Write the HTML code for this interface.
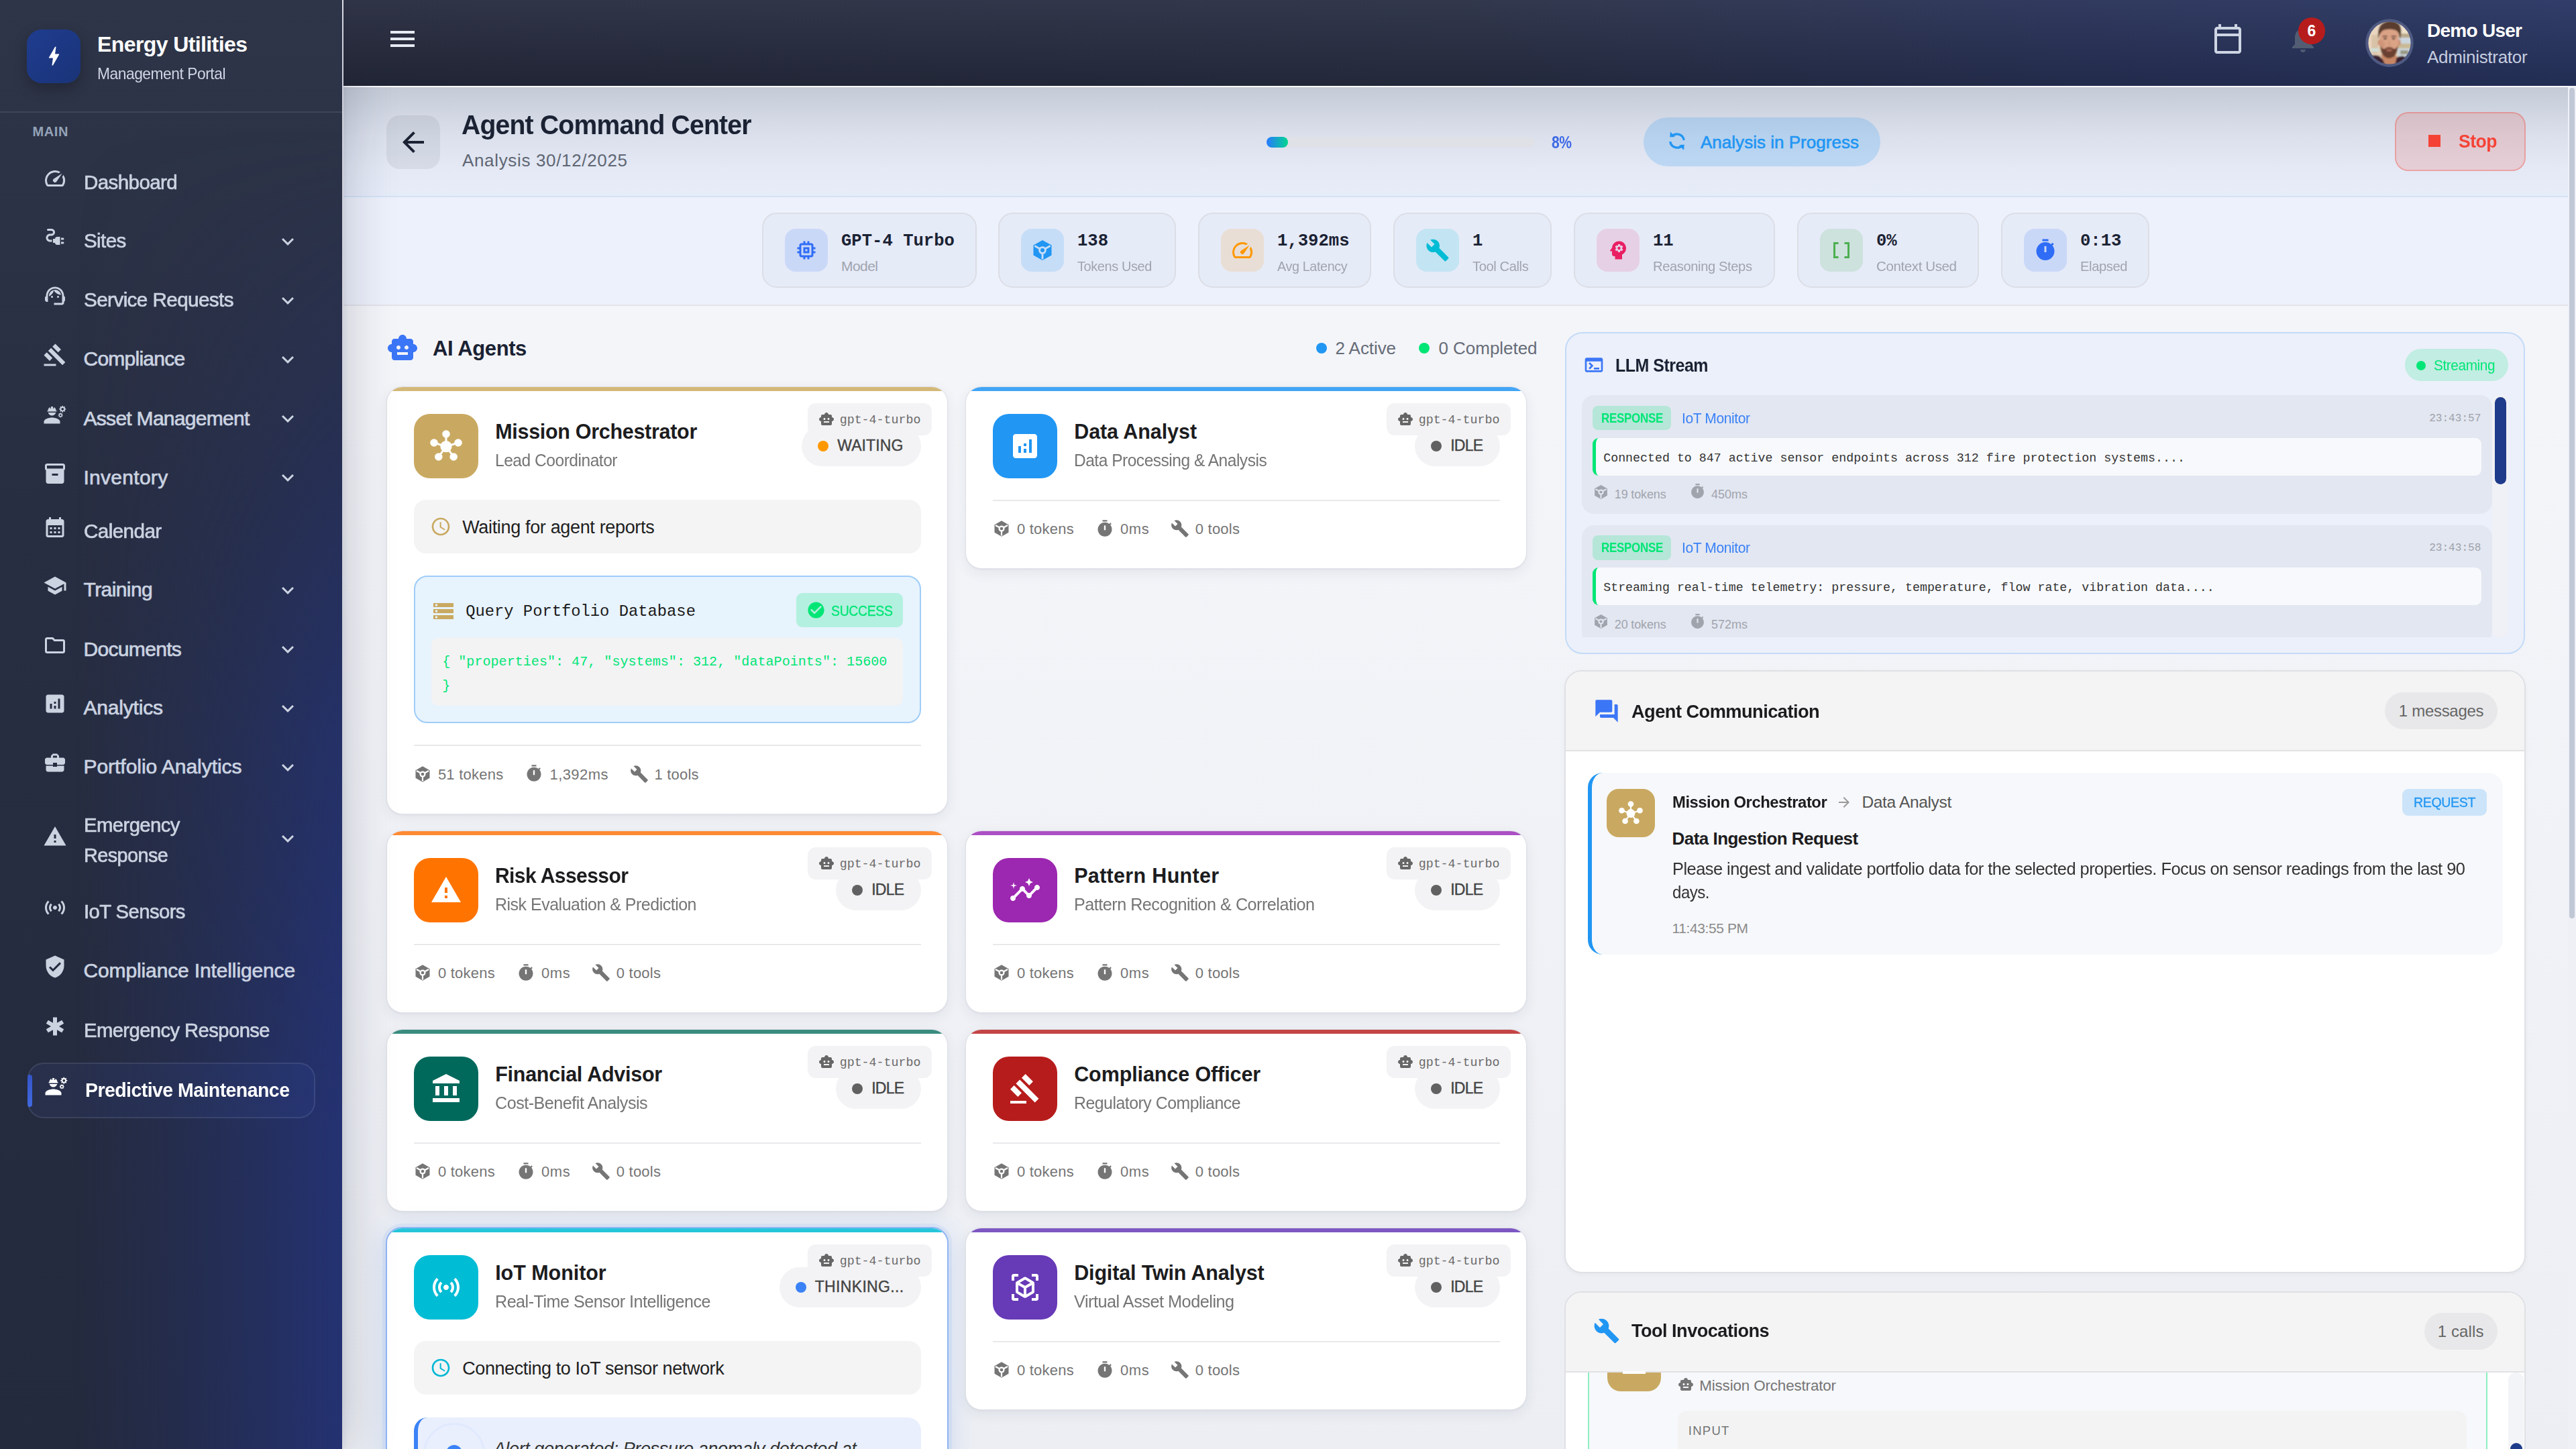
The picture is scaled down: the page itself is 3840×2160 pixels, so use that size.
<!DOCTYPE html><html lang="en"><head><meta charset="utf-8"><title>Agent Command Center</title><style>
*{box-sizing:border-box;margin:0;padding:0}
html,body{width:3840px;height:2160px;overflow:hidden}
body{position:relative;background:#f3f4f8;font-family:"Liberation Sans",sans-serif;font-kerning:none;-webkit-font-smoothing:antialiased}
div,span,svg{position:absolute}
#main{left:0;top:0;width:3840px;height:2160px;overflow:hidden;background:linear-gradient(180deg,#f4f5f9 0,#f4f5f9 600px,#eceef3 2160px)}
#sidebar{left:0;top:0;width:510px;height:2160px;background:linear-gradient(180deg,#2e3548 0%,#282e41 35%,#242a3d 100%);box-shadow:10px 0 70px rgba(20,30,60,.2),2px 0 10px rgba(20,30,60,.08)}
#sbblue{left:0;top:0;width:510px;height:2160px;background:linear-gradient(90deg,rgba(36,50,112,0) 22%,rgba(36,50,112,.28) 50%,rgba(36,50,112,.62) 75%,rgba(36,50,114,1) 100%);-webkit-mask-image:linear-gradient(180deg,transparent 9%,rgba(0,0,0,.3) 28%,rgba(0,0,0,.78) 50%,#000 78%);mask-image:linear-gradient(180deg,transparent 9%,rgba(0,0,0,.3) 28%,rgba(0,0,0,.78) 50%,#000 78%)}
#header{left:512px;top:0;width:3328px;height:128px;background:linear-gradient(180deg,rgba(255,255,255,.045) 0%,rgba(0,0,0,.15) 100%),linear-gradient(90deg,#262b3e 0%,#292f44 50%,#283258 78%,#283562 100%)}
.card{background:#fff;border:2px solid #e4e6ec;border-radius:24px;overflow:hidden;box-shadow:0 4px 16px rgba(30,40,70,.07)}
.strip{left:0;top:0;right:0;height:6px;width:100%}
</style></head><body>
<div id="main">
<div style="left:512px;top:128px;width:3316px;height:2px;background:#fbfcfe"></div>
<div style="left:512px;top:130px;width:3316px;height:162px;background:linear-gradient(180deg,#c4cad6 0%,#cdd3df 18%,#dbe0ec 45%,#e4e9f5 75%,#e7ecf9 100%)"></div>
<div style="left:512px;top:292px;width:3316px;height:2px;background:#d3e2f6"></div>
<div style="left:512px;top:294px;width:3316px;height:160px;background:#edf1fb"></div>
<div style="left:512px;top:454px;width:3316px;height:2px;background:#e3e4ea"></div>
<div style="position:absolute;left:576.0px;top:172.0px;width:80.0px;height:80.0px;background:rgba(30,40,60,.07);border-radius:20px"></div>
<svg style="position:absolute;left:592.0px;top:188.0px;" width="48" height="48" viewBox="0 0 24 24"><path fill="#1a2233" d="M20 11H7.83l5.59-5.59L12 4l-8 8 8 8 1.41-1.41L7.83 13H20v-2z"/></svg>
<span style="position:absolute;top:166.3px;font:700 40px/1 'Liberation Sans',sans-serif;color:#1a2233;letter-spacing:-0.80px;white-space:pre;left:688.0px;transform:scaleX(0.9772);transform-origin:left center;">Agent Command Center</span>
<span style="position:absolute;top:226.0px;font:400 26px/1 'Liberation Sans',sans-serif;color:#5f6673;letter-spacing:0.66px;white-space:pre;left:689.0px;">Analysis 30/12/2025</span>
<div style="position:absolute;left:1888.0px;top:204.0px;width:400.0px;height:16.0px;background:#dfe1e6;border-radius:8px"></div>
<div style="position:absolute;left:1888.0px;top:204.0px;width:32.0px;height:16.0px;background:linear-gradient(90deg,#2979ff,#00d68f);border-radius:8px"></div>
<span style="position:absolute;top:199.4px;font:700 26px/1 'Liberation Sans',sans-serif;color:#3f6ae6;letter-spacing:-0.52px;white-space:pre;left:2313.0px;transform:scaleX(0.8095);transform-origin:left center;">8%</span>
<div style="position:absolute;left:2450.0px;top:175.0px;width:353.0px;height:73.0px;background:rgba(33,150,243,.2);border-radius:37px"></div>
<svg style="left:2484.5px;top:194.8px" width="30" height="30" viewBox="0 0 24 24"><g fill="none" stroke="#2196f3" stroke-width="2.600"><path d="M20.200 11.200A8.300 8.300 0 0 0 5.600 6.900"/><path d="M3.800 12.800A8.300 8.300 0 0 0 18.400 17.100"/></g><path fill="#2196f3" d="M3.950 1.100 3.400 7.600 9.800 6.700zM20.050 22.900 20.600 16.400 14.200 17.300z"/></svg>
<span style="position:absolute;top:199.4px;font:400 26px/1 'Liberation Sans',sans-serif;color:#2196f3;letter-spacing:0.02px;white-space:pre;left:2535.0px;-webkit-text-stroke:0.6px #2196f3;">Analysis in Progress</span>
<div style="position:absolute;left:3570.0px;top:167.0px;width:195.0px;height:88.0px;background:rgba(244,67,54,.16);border:2px solid rgba(244,67,54,.32);border-radius:20px"></div>
<div style="position:absolute;left:3620.0px;top:201.0px;width:18.0px;height:18.0px;background:#f44336"></div>
<span style="position:absolute;top:196.9px;font:700 28px/1 'Liberation Sans',sans-serif;color:#f44336;letter-spacing:-0.56px;white-space:pre;left:3664.5px;transform:scaleX(0.9500);transform-origin:left center;">Stop</span>
<div style="position:absolute;left:1136.0px;top:317.0px;width:320.0px;height:112.0px;background:#e6ebf8;border:2px solid #dcdee5;border-radius:22px"></div>
<div style="position:absolute;left:1170.0px;top:341.0px;width:64.0px;height:64.0px;background:rgba(47,109,246,.15);border-radius:16px"></div>
<svg style="position:absolute;left:1184.0px;top:355.0px;" width="36" height="36" viewBox="0 0 24 24"><path fill="#2f6df6" d="M15 9H9v6h6V9zm-2 4h-2v-2h2v2zm8-2V9h-2V7c0-1.1-.9-2-2-2h-2V3h-2v2h-2V3H9v2H7c-1.1 0-2 .9-2 2v2H3v2h2v2H3v2h2v2c0 1.1.9 2 2 2h2v2h2v-2h2v2h2v-2h2c1.1 0 2-.9 2-2v-2h2v-2h-2v-2h2zm-4 6H7V7h10v10z"/></svg>
<span style="position:absolute;top:347.3px;font:700 25.6px/1 'Liberation Mono',monospace;color:#1a2233;letter-spacing:0.00px;white-space:pre;left:1254.0px;">GPT-4 Turbo</span>
<span style="position:absolute;top:386.2px;font:400 21px/1 'Liberation Sans',sans-serif;color:#9fa4ae;letter-spacing:-0.55px;white-space:pre;left:1254.0px;">Model</span>
<div style="position:absolute;left:1488.0px;top:317.0px;width:265.0px;height:112.0px;background:#e6ebf8;border:2px solid #dcdee5;border-radius:22px"></div>
<div style="position:absolute;left:1522.0px;top:341.0px;width:64.0px;height:64.0px;background:rgba(33,150,243,.16);border-radius:16px"></div>
<svg style="left:1536px;top:355px" width="36" height="36" viewBox="0 0 24 24"><use href="#tok" fill="#2196f3"/></svg>
<span style="position:absolute;top:347.3px;font:700 25.6px/1 'Liberation Mono',monospace;color:#1a2233;letter-spacing:0.00px;white-space:pre;left:1606.0px;">138</span>
<span style="position:absolute;top:386.2px;font:400 21px/1 'Liberation Sans',sans-serif;color:#9fa4ae;letter-spacing:-0.42px;white-space:pre;left:1606.0px;transform:scaleX(0.9496);transform-origin:left center;">Tokens Used</span>
<div style="position:absolute;left:1786.0px;top:317.0px;width:258.0px;height:112.0px;background:#e6ebf8;border:2px solid #dcdee5;border-radius:22px"></div>
<div style="position:absolute;left:1820.0px;top:341.0px;width:64.0px;height:64.0px;background:rgba(255,152,0,.14);border-radius:16px"></div>
<svg style="position:absolute;left:1834.0px;top:355.0px;" width="36" height="36" viewBox="0 0 24 24"><path fill="#ff9800" d="M20.38 8.57l-1.23 1.85a8 8 0 0 1-.22 7.58H5.07A8 8 0 0 1 15.58 6.85l1.85-1.23A10 10 0 0 0 3.35 19a2 2 0 0 0 1.72 1h13.85a2 2 0 0 0 1.74-1 10 10 0 0 0-.27-10.44zm-9.79 6.84a2 2 0 0 0 2.83 0l5.66-8.49-8.49 5.66a2 2 0 0 0 0 2.83z"/></svg>
<span style="position:absolute;top:347.3px;font:700 25.6px/1 'Liberation Mono',monospace;color:#1a2233;letter-spacing:0.00px;white-space:pre;left:1904.0px;">1,392ms</span>
<span style="position:absolute;top:386.2px;font:400 21px/1 'Liberation Sans',sans-serif;color:#9fa4ae;letter-spacing:-0.42px;white-space:pre;left:1904.0px;transform:scaleX(0.9428);transform-origin:left center;">Avg Latency</span>
<div style="position:absolute;left:2077.0px;top:317.0px;width:236.0px;height:112.0px;background:#e6ebf8;border:2px solid #dcdee5;border-radius:22px"></div>
<div style="position:absolute;left:2111.0px;top:341.0px;width:64.0px;height:64.0px;background:rgba(0,188,212,.15);border-radius:16px"></div>
<svg style="position:absolute;left:2125.0px;top:355.0px;" width="36" height="36" viewBox="0 0 24 24"><path fill="#00bcd4" d="M22.7 19l-9.1-9.1c.9-2.3.4-5-1.5-6.9-2-2-5-2.4-7.4-1.3L9 6 6 9 1.6 4.7C.4 7.1.9 10.1 2.9 12.1c1.9 1.9 4.6 2.4 6.9 1.5l9.1 9.1c.4.4 1 .4 1.4 0l2.3-2.3c.5-.4.5-1.1.1-1.4z"/></svg>
<span style="position:absolute;top:347.3px;font:700 25.6px/1 'Liberation Mono',monospace;color:#1a2233;letter-spacing:0.00px;white-space:pre;left:2195.0px;">1</span>
<span style="position:absolute;top:386.2px;font:400 21px/1 'Liberation Sans',sans-serif;color:#9fa4ae;letter-spacing:-0.42px;white-space:pre;left:2195.0px;transform:scaleX(0.9600);transform-origin:left center;">Tool Calls</span>
<div style="position:absolute;left:2346.0px;top:317.0px;width:300.0px;height:112.0px;background:#e6ebf8;border:2px solid #dcdee5;border-radius:22px"></div>
<div style="position:absolute;left:2380.0px;top:341.0px;width:64.0px;height:64.0px;background:rgba(233,30,99,.13);border-radius:16px"></div>
<svg style="position:absolute;left:2394.0px;top:355.0px;" width="36" height="36" viewBox="0 0 24 24"><path fill="#e91e63" d="M13 3C9.25 3 6.2 5.94 6.02 9.64L4.1 12.2c-.25.33-.01.8.4.8H6v3c0 1.1.9 2 2 2h1v3h7v-4.68c2.36-1.12 4-3.53 4-6.32 0-3.87-3.13-7-7-7zm3 7c0 .13-.01.26-.02.39l.83.66c.08.06.1.16.05.25l-.8 1.39c-.05.09-.16.12-.24.09l-.99-.4c-.21.16-.43.29-.67.39L14 13.83c-.01.1-.1.17-.2.17h-1.6c-.1 0-.18-.07-.2-.17l-.15-1.06c-.25-.1-.47-.23-.68-.39l-.99.4c-.09.03-.2 0-.25-.09l-.8-1.39c-.05-.08-.03-.19.05-.25l.84-.66c-.01-.13-.02-.26-.02-.39s.02-.27.04-.39l-.85-.66c-.08-.06-.1-.16-.05-.26l.8-1.38c.05-.09.15-.12.24-.09l1 .4c.2-.15.43-.29.67-.39L12 6.17c.02-.1.1-.17.2-.17h1.6c.1 0 .18.07.2.17l.15 1.06c.24.1.46.23.67.39l1-.4c.09-.03.2 0 .24.09l.8 1.38c.05.09.03.2-.05.26l-.85.66c.03.12.04.25.04.39zM13 8.57c-.79 0-1.43.64-1.43 1.43s.64 1.43 1.43 1.43 1.43-.64 1.43-1.43-.64-1.43-1.43-1.43z"/></svg>
<span style="position:absolute;top:347.3px;font:700 25.6px/1 'Liberation Mono',monospace;color:#1a2233;letter-spacing:0.00px;white-space:pre;left:2464.0px;">11</span>
<span style="position:absolute;top:386.2px;font:400 21px/1 'Liberation Sans',sans-serif;color:#9fa4ae;letter-spacing:-0.42px;white-space:pre;left:2464.0px;transform:scaleX(0.9607);transform-origin:left center;">Reasoning Steps</span>
<div style="position:absolute;left:2679.0px;top:317.0px;width:271.0px;height:112.0px;background:#e6ebf8;border:2px solid #dcdee5;border-radius:22px"></div>
<div style="position:absolute;left:2713.0px;top:341.0px;width:64.0px;height:64.0px;background:rgba(76,175,80,.16);border-radius:16px"></div>
<svg style="position:absolute;left:2727.0px;top:355.0px;" width="36" height="36" viewBox="0 0 24 24"><path fill="#4caf50" d="M15 4v2h3v12h-3v2h5V4zM4 20h5v-2H6V6h3V4H4z"/></svg>
<span style="position:absolute;top:347.3px;font:700 25.6px/1 'Liberation Mono',monospace;color:#1a2233;letter-spacing:0.00px;white-space:pre;left:2797.0px;">0%</span>
<span style="position:absolute;top:386.2px;font:400 21px/1 'Liberation Sans',sans-serif;color:#9fa4ae;letter-spacing:-0.42px;white-space:pre;left:2797.0px;transform:scaleX(0.9787);transform-origin:left center;">Context Used</span>
<div style="position:absolute;left:2983.0px;top:317.0px;width:221.0px;height:112.0px;background:#e6ebf8;border:2px solid #dcdee5;border-radius:22px"></div>
<div style="position:absolute;left:3017.0px;top:341.0px;width:64.0px;height:64.0px;background:rgba(47,109,246,.15);border-radius:16px"></div>
<svg style="position:absolute;left:3031.0px;top:355.0px;" width="36" height="36" viewBox="0 0 24 24"><path fill="#2f6df6" d="M9 1h6v2H9zm10.03 6.39l1.42-1.42c-.43-.51-.9-.99-1.41-1.41l-1.42 1.42C16.07 4.74 14.12 4 12 4c-4.97 0-9 4.03-9 9s4.02 9 9 9 9-4.03 9-9c0-2.12-.74-4.07-1.97-5.61zM13 14h-2V8h2v6z"/></svg>
<span style="position:absolute;top:347.3px;font:700 25.6px/1 'Liberation Mono',monospace;color:#1a2233;letter-spacing:0.00px;white-space:pre;left:3101.0px;">0:13</span>
<span style="position:absolute;top:386.2px;font:400 21px/1 'Liberation Sans',sans-serif;color:#9fa4ae;letter-spacing:-0.42px;white-space:pre;left:3101.0px;transform:scaleX(0.9609);transform-origin:left center;">Elapsed</span>
<svg style="position:absolute;left:576.0px;top:495.0px;" width="48" height="48" viewBox="0 0 24 24"><path fill="#3b76f6" d="M20 9V7c0-1.1-.9-2-2-2h-3c0-1.66-1.34-3-3-3S9 3.34 9 5H6c-1.1 0-2 .9-2 2v2c-1.66 0-3 1.34-3 3s1.34 3 3 3v4c0 1.1.9 2 2 2h12c1.1 0 2-.9 2-2v-4c1.66 0 3-1.34 3-3s-1.34-3-3-3zM7.5 11.5c0-.83.67-1.5 1.5-1.5s1.5.67 1.5 1.5S9.83 13 9 13s-1.5-.67-1.5-1.5zM16 17H8v-2h8v2zm-1-4c-.83 0-1.5-.67-1.5-1.5S14.17 10 15 10s1.5.67 1.5 1.5S15.83 13 15 13z"/></svg>
<span style="position:absolute;top:503.5px;font:700 31px/1 'Liberation Sans',sans-serif;color:#1a2233;letter-spacing:-0.40px;white-space:pre;left:645.0px;">AI Agents</span>
<div style="position:absolute;left:1961.7px;top:511.0px;width:16.0px;height:16.0px;background:#2196f3;border-radius:50%"></div>
<span style="position:absolute;top:506.2px;font:400 26px/1 'Liberation Sans',sans-serif;color:#666c78;letter-spacing:-0.07px;white-space:pre;left:1990.5px;">2 Active</span>
<div style="position:absolute;left:2115.3px;top:511.0px;width:16.0px;height:16.0px;background:#00e676;border-radius:50%"></div>
<span style="position:absolute;top:506.2px;font:400 26px/1 'Liberation Sans',sans-serif;color:#666c78;letter-spacing:-0.04px;white-space:pre;left:2144.5px;">0 Completed</span>
<svg width="0" height="0" style="left:0;top:0"><defs>
<mask id="tokm"><rect width="24" height="24" fill="#000"/><path d="M12 2 21 7v10l-9 5-9-5V7z" fill="#fff"/>
<path d="M12 12 4.200 7.700M12 12l7.800-4.300M12 12v9" stroke="#000" stroke-width="1.900" fill="none"/>
<circle cx="12" cy="12" r="3.900" fill="#000"/><circle cx="12" cy="12" r="2" fill="#fff"/></mask>
<g id="tok"><rect width="24" height="24" mask="url(#tokm)"/></g>
<g id="hub"><g stroke="#fff" stroke-width="1.500"><path d="M12 12.300V3M12 12.300l9-2.800M12 12.300l5.600 7.600M12 12.300l-5.600 7.600M12 12.300 3 9.500"/></g>
<circle cx="12" cy="12.300" r="4.300"/><circle cx="12" cy="3" r="2.900"/><circle cx="21" cy="9.500" r="2.900"/><circle cx="17.600" cy="20" r="2.900"/><circle cx="6.400" cy="20" r="2.900"/><circle cx="3" cy="9.500" r="2.900"/></g>
</defs></svg>
<div class="card" style="left:576.2px;top:576px;width:837px;height:637.5px;border:1px solid #dfe1e7;box-shadow:0 6px 20px rgba(30,40,70,.07),0 1px 3px rgba(30,40,70,.05)"><div style="left:0;top:0;width:100%;height:6px;background:#d4b878"></div><div style="position:absolute;left:40.0px;top:39.5px;width:96.0px;height:96.0px;background:#c9a961;border-radius:24px"></div><svg style="left:64.0px;top:63.5px" width="48" height="48" viewBox="0 0 24 24"><use href="#hub" fill="#fff"/></svg><span style="position:absolute;top:50.7px;font:700 30.5px/1 'Liberation Sans',sans-serif;color:#1c1c1e;letter-spacing:-0.30px;white-space:pre;left:161.0px;">Mission Orchestrator</span><span style="position:absolute;top:95.5px;font:400 26px/1 'Liberation Sans',sans-serif;color:#757575;letter-spacing:-0.52px;white-space:pre;left:161.0px;transform:scaleX(0.9450);transform-origin:left center;">Lead Coordinator</span><div style="position:absolute;left:627.0px;top:24.0px;width:184.5px;height:47.5px;background:#f3f3f5;border-radius:12px"></div><svg style="position:absolute;left:643.0px;top:35.5px;" width="24" height="24" viewBox="0 0 24 24"><path fill="#666" d="M20 9V7c0-1.1-.9-2-2-2h-3c0-1.66-1.34-3-3-3S9 3.34 9 5H6c-1.1 0-2 .9-2 2v2c-1.66 0-3 1.34-3 3s1.34 3 3 3v4c0 1.1.9 2 2 2h12c1.1 0 2-.9 2-2v-4c1.66 0 3-1.34 3-3s-1.34-3-3-3zM7.5 11.5c0-.83.67-1.5 1.5-1.5s1.5.67 1.5 1.5S9.83 13 9 13s-1.5-.67-1.5-1.5zM16 17H8v-2h8v2zm-1-4c-.83 0-1.5-.67-1.5-1.5S14.17 10 15 10s1.5.67 1.5 1.5S15.83 13 15 13z"/></svg><span style="position:absolute;top:40.3px;font:400 18.3px/1 'Liberation Mono',monospace;color:#6a6a6a;letter-spacing:0.00px;white-space:pre;left:674.5px;">gpt-4-turbo</span><div style="position:absolute;left:618.0px;top:58.0px;width:177.5px;height:60.0px;background:#f3f3f5;border-radius:30px"></div><div style="position:absolute;left:642.0px;top:80.0px;width:16.0px;height:16.0px;background:#ff9800;border-radius:50%"></div><span style="position:absolute;top:76.0px;font:400 23px/1 'Liberation Sans',sans-serif;color:#444;letter-spacing:0.10px;white-space:pre;left:671.0px;-webkit-text-stroke:0.4px #444;">WAITING</span><div style="position:absolute;left:40.0px;top:168.0px;width:755.5px;height:80.0px;background:#f4f4f5;border-radius:18px"></div><svg style="position:absolute;left:64.0px;top:192.0px;" width="32" height="32" viewBox="0 0 24 24"><path fill="#c9a961" d="M11.99 2C6.47 2 2 6.48 2 12s4.47 10 9.99 10C17.52 22 22 17.52 22 12S17.52 2 11.99 2zM12 20c-4.42 0-8-3.58-8-8s3.58-8 8-8 8 3.58 8 8-3.58 8-8 8zm.5-13H11v6l5.25 3.15.75-1.23-4.5-2.67z"/></svg><span style="position:absolute;top:196.3px;font:400 27px/1 'Liberation Sans',sans-serif;color:#1f1f1f;letter-spacing:-0.34px;white-space:pre;left:112.0px;">Waiting for agent reports</span><div style="left:40px;top:281px;width:755.5px;height:220px;background:#e7f3fd;border:2px solid #9fcdf9;border-radius:20px"><svg style="position:absolute;left:24.0px;top:33.0px;" width="36" height="36" viewBox="0 0 24 24"><path fill="#c9a961" d="M2 20h20v-4H2v4zm2-3h2v2H4v-2zM2 4v4h20V4H2zm4 3H4V5h2v2zm-4 7h20v-4H2v4zm2-3h2v2H4v-2z"/></svg><span style="position:absolute;top:39.5px;font:400 23.8px/1 'Liberation Mono',monospace;color:#1a1a1a;letter-spacing:0.00px;white-space:pre;left:75.0px;">Query Portfolio Database</span><div style="position:absolute;left:567.5px;top:24.0px;width:159.0px;height:50.5px;background:rgba(0,230,118,.22);border-radius:9px"></div><svg style="position:absolute;left:582.5px;top:35.0px;" width="29" height="29" viewBox="0 0 24 24"><path fill="#00e676" d="M12 2C6.48 2 2 6.48 2 12s4.48 10 10 10 10-4.48 10-10S17.52 2 12 2zm-2 15l-5-5 1.41-1.41L10 14.17l7.59-7.59L19 8l-9 9z"/></svg><span style="position:absolute;top:41.0px;font:400 21.5px/1 'Liberation Sans',sans-serif;color:#00e676;letter-spacing:-0.43px;white-space:pre;left:619.5px;transform:scaleX(0.9076);transform-origin:left center;-webkit-text-stroke:0.3px #00e676;">SUCCESS</span><div style="position:absolute;left:24.0px;top:91.0px;width:702.5px;height:101.0px;background:#f3f3f4;border-radius:10px"></div><span style="position:absolute;top:117.1px;font:400 20.1px/1 'Liberation Mono',monospace;color:#00e676;letter-spacing:0.00px;white-space:pre;left:40.0px;">{ "properties": 47, "systems": 312, "dataPoints": 15600</span><span style="position:absolute;top:152.6px;font:400 20.1px/1 'Liberation Mono',monospace;color:#00e676;letter-spacing:0.00px;white-space:pre;left:40.0px;">}</span></div><div style="position:absolute;left:40.0px;top:533.3px;width:755.5px;height:2.0px;background:#e9e9ec"></div><svg style="left:39.1px;top:562.9px" width="28" height="28" viewBox="0 0 24 24"><use href="#tok" fill="#757575"/></svg><span style="position:absolute;top:567.0px;font:400 22px/1 'Liberation Sans',sans-serif;color:#757575;letter-spacing:0.24px;white-space:pre;left:75.7px;">51 tokens</span><svg style="position:absolute;left:205.3px;top:562.4px;" width="28" height="28" viewBox="0 0 24 24"><path fill="#757575" d="M9 1h6v2H9zm10.03 6.39l1.42-1.42c-.43-.51-.9-.99-1.41-1.41l-1.42 1.42C16.07 4.74 14.12 4 12 4c-4.97 0-9 4.03-9 9s4.02 9 9 9 9-4.03 9-9c0-2.12-.74-4.07-1.97-5.61zM13 14h-2V8h2v6z"/></svg><span style="position:absolute;top:567.0px;font:400 22px/1 'Liberation Sans',sans-serif;color:#757575;letter-spacing:0.42px;white-space:pre;left:242.3px;">1,392ms</span><svg style="position:absolute;left:361.4px;top:562.6px;" width="28" height="28" viewBox="0 0 24 24"><path fill="#757575" d="M22.7 19l-9.1-9.1c.9-2.3.4-5-1.5-6.9-2-2-5-2.4-7.4-1.3L9 6 6 9 1.6 4.7C.4 7.1.9 10.1 2.9 12.1c1.9 1.9 4.6 2.4 6.9 1.5l9.1 9.1c.4.4 1 .4 1.4 0l2.3-2.3c.5-.4.5-1.1.1-1.4z"/></svg><span style="position:absolute;top:567.0px;font:400 22px/1 'Liberation Sans',sans-serif;color:#757575;letter-spacing:0.22px;white-space:pre;left:398.2px;">1 tools</span></div>
<div class="card" style="left:1439.2px;top:576px;width:837px;height:271.5px;border:1px solid #dfe1e7;box-shadow:0 6px 20px rgba(30,40,70,.07),0 1px 3px rgba(30,40,70,.05)"><div style="left:0;top:0;width:100%;height:6px;background:#42a5f5"></div><div style="position:absolute;left:40.0px;top:39.5px;width:96.0px;height:96.0px;background:#2196f3;border-radius:24px"></div><svg style="position:absolute;left:64.0px;top:63.5px;" width="48" height="48" viewBox="0 0 24 24"><path fill="#fff" d="M19 3H5c-1.1 0-2 .9-2 2v14c0 1.1.9 2 2 2h14c1.1 0 2-.9 2-2V5c0-1.1-.9-2-2-2zM9 17H7v-5h2v5zm4 0h-2v-3h2v3zm0-5h-2v-2h2v2zm4 5h-2V7h2v10z"/></svg><span style="position:absolute;top:50.7px;font:700 30.5px/1 'Liberation Sans',sans-serif;color:#1c1c1e;letter-spacing:-0.07px;white-space:pre;left:161.0px;">Data Analyst</span><span style="position:absolute;top:95.5px;font:400 26px/1 'Liberation Sans',sans-serif;color:#757575;letter-spacing:-0.52px;white-space:pre;left:161.0px;transform:scaleX(0.9433);transform-origin:left center;">Data Processing &amp; Analysis</span><div style="position:absolute;left:627.0px;top:24.0px;width:184.5px;height:47.5px;background:#f3f3f5;border-radius:12px"></div><svg style="position:absolute;left:643.0px;top:35.5px;" width="24" height="24" viewBox="0 0 24 24"><path fill="#666" d="M20 9V7c0-1.1-.9-2-2-2h-3c0-1.66-1.34-3-3-3S9 3.34 9 5H6c-1.1 0-2 .9-2 2v2c-1.66 0-3 1.34-3 3s1.34 3 3 3v4c0 1.1.9 2 2 2h12c1.1 0 2-.9 2-2v-4c1.66 0 3-1.34 3-3s-1.34-3-3-3zM7.5 11.5c0-.83.67-1.5 1.5-1.5s1.5.67 1.5 1.5S9.83 13 9 13s-1.5-.67-1.5-1.5zM16 17H8v-2h8v2zm-1-4c-.83 0-1.5-.67-1.5-1.5S14.17 10 15 10s1.5.67 1.5 1.5S15.83 13 15 13z"/></svg><span style="position:absolute;top:40.3px;font:400 18.3px/1 'Liberation Mono',monospace;color:#6a6a6a;letter-spacing:0.00px;white-space:pre;left:674.5px;">gpt-4-turbo</span><div style="position:absolute;left:669.0px;top:58.0px;width:126.5px;height:60.0px;background:#f3f3f5;border-radius:30px"></div><div style="position:absolute;left:693.0px;top:80.0px;width:16.0px;height:16.0px;background:#616161;border-radius:50%"></div><span style="position:absolute;top:76.0px;font:400 23px/1 'Liberation Sans',sans-serif;color:#444;letter-spacing:-0.71px;white-space:pre;left:722.0px;-webkit-text-stroke:0.4px #444;">IDLE</span><div style="position:absolute;left:40.0px;top:167.6px;width:755.5px;height:2.0px;background:#e9e9ec"></div><svg style="left:39.1px;top:197.2px" width="28" height="28" viewBox="0 0 24 24"><use href="#tok" fill="#757575"/></svg><span style="position:absolute;top:201.3px;font:400 22px/1 'Liberation Sans',sans-serif;color:#757575;letter-spacing:0.24px;white-space:pre;left:75.7px;">0 tokens</span><svg style="position:absolute;left:192.8px;top:196.7px;" width="28" height="28" viewBox="0 0 24 24"><path fill="#757575" d="M9 1h6v2H9zm10.03 6.39l1.42-1.42c-.43-.51-.9-.99-1.41-1.41l-1.42 1.42C16.07 4.74 14.12 4 12 4c-4.97 0-9 4.03-9 9s4.02 9 9 9 9-4.03 9-9c0-2.12-.74-4.07-1.97-5.61zM13 14h-2V8h2v6z"/></svg><span style="position:absolute;top:201.3px;font:400 22px/1 'Liberation Sans',sans-serif;color:#757575;letter-spacing:0.62px;white-space:pre;left:229.8px;">0ms</span><svg style="position:absolute;left:304.8px;top:196.9px;" width="28" height="28" viewBox="0 0 24 24"><path fill="#757575" d="M22.7 19l-9.1-9.1c.9-2.3.4-5-1.5-6.9-2-2-5-2.4-7.4-1.3L9 6 6 9 1.6 4.7C.4 7.1.9 10.1 2.9 12.1c1.9 1.9 4.6 2.4 6.9 1.5l9.1 9.1c.4.4 1 .4 1.4 0l2.3-2.3c.5-.4.5-1.1.1-1.4z"/></svg><span style="position:absolute;top:201.3px;font:400 22px/1 'Liberation Sans',sans-serif;color:#757575;letter-spacing:0.22px;white-space:pre;left:341.6px;">0 tools</span></div>
<div class="card" style="left:576.2px;top:1238px;width:837px;height:271.5px;border:1px solid #dfe1e7;box-shadow:0 6px 20px rgba(30,40,70,.07),0 1px 3px rgba(30,40,70,.05)"><div style="left:0;top:0;width:100%;height:6px;background:#ff8a33"></div><div style="position:absolute;left:40.0px;top:39.5px;width:96.0px;height:96.0px;background:#ff7400;border-radius:24px"></div><svg style="position:absolute;left:64.0px;top:63.5px;" width="48" height="48" viewBox="0 0 24 24"><path fill="#fff" d="M1 21h22L12 2 1 21zm12-3h-2v-2h2v2zm0-4h-2v-4h2v4z"/></svg><span style="position:absolute;top:50.7px;font:700 30.5px/1 'Liberation Sans',sans-serif;color:#1c1c1e;letter-spacing:-0.61px;white-space:pre;left:161.0px;transform:scaleX(0.9856);transform-origin:left center;">Risk Assessor</span><span style="position:absolute;top:95.5px;font:400 26px/1 'Liberation Sans',sans-serif;color:#757575;letter-spacing:-0.52px;white-space:pre;left:161.0px;transform:scaleX(0.9614);transform-origin:left center;">Risk Evaluation &amp; Prediction</span><div style="position:absolute;left:627.0px;top:24.0px;width:184.5px;height:47.5px;background:#f3f3f5;border-radius:12px"></div><svg style="position:absolute;left:643.0px;top:35.5px;" width="24" height="24" viewBox="0 0 24 24"><path fill="#666" d="M20 9V7c0-1.1-.9-2-2-2h-3c0-1.66-1.34-3-3-3S9 3.34 9 5H6c-1.1 0-2 .9-2 2v2c-1.66 0-3 1.34-3 3s1.34 3 3 3v4c0 1.1.9 2 2 2h12c1.1 0 2-.9 2-2v-4c1.66 0 3-1.34 3-3s-1.34-3-3-3zM7.5 11.5c0-.83.67-1.5 1.5-1.5s1.5.67 1.5 1.5S9.83 13 9 13s-1.5-.67-1.5-1.5zM16 17H8v-2h8v2zm-1-4c-.83 0-1.5-.67-1.5-1.5S14.17 10 15 10s1.5.67 1.5 1.5S15.83 13 15 13z"/></svg><span style="position:absolute;top:40.3px;font:400 18.3px/1 'Liberation Mono',monospace;color:#6a6a6a;letter-spacing:0.00px;white-space:pre;left:674.5px;">gpt-4-turbo</span><div style="position:absolute;left:669.0px;top:58.0px;width:126.5px;height:60.0px;background:#f3f3f5;border-radius:30px"></div><div style="position:absolute;left:693.0px;top:80.0px;width:16.0px;height:16.0px;background:#616161;border-radius:50%"></div><span style="position:absolute;top:76.0px;font:400 23px/1 'Liberation Sans',sans-serif;color:#444;letter-spacing:-0.71px;white-space:pre;left:722.0px;-webkit-text-stroke:0.4px #444;">IDLE</span><div style="position:absolute;left:40.0px;top:167.6px;width:755.5px;height:2.0px;background:#e9e9ec"></div><svg style="left:39.1px;top:197.2px" width="28" height="28" viewBox="0 0 24 24"><use href="#tok" fill="#757575"/></svg><span style="position:absolute;top:201.3px;font:400 22px/1 'Liberation Sans',sans-serif;color:#757575;letter-spacing:0.24px;white-space:pre;left:75.7px;">0 tokens</span><svg style="position:absolute;left:192.8px;top:196.7px;" width="28" height="28" viewBox="0 0 24 24"><path fill="#757575" d="M9 1h6v2H9zm10.03 6.39l1.42-1.42c-.43-.51-.9-.99-1.41-1.41l-1.42 1.42C16.07 4.74 14.12 4 12 4c-4.97 0-9 4.03-9 9s4.02 9 9 9 9-4.03 9-9c0-2.12-.74-4.07-1.97-5.61zM13 14h-2V8h2v6z"/></svg><span style="position:absolute;top:201.3px;font:400 22px/1 'Liberation Sans',sans-serif;color:#757575;letter-spacing:0.62px;white-space:pre;left:229.8px;">0ms</span><svg style="position:absolute;left:304.8px;top:196.9px;" width="28" height="28" viewBox="0 0 24 24"><path fill="#757575" d="M22.7 19l-9.1-9.1c.9-2.3.4-5-1.5-6.9-2-2-5-2.4-7.4-1.3L9 6 6 9 1.6 4.7C.4 7.1.9 10.1 2.9 12.1c1.9 1.9 4.6 2.4 6.9 1.5l9.1 9.1c.4.4 1 .4 1.4 0l2.3-2.3c.5-.4.5-1.1.1-1.4z"/></svg><span style="position:absolute;top:201.3px;font:400 22px/1 'Liberation Sans',sans-serif;color:#757575;letter-spacing:0.22px;white-space:pre;left:341.6px;">0 tools</span></div>
<div class="card" style="left:1439.2px;top:1238px;width:837px;height:271.5px;border:1px solid #dfe1e7;box-shadow:0 6px 20px rgba(30,40,70,.07),0 1px 3px rgba(30,40,70,.05)"><div style="left:0;top:0;width:100%;height:6px;background:#ab4fc4"></div><div style="position:absolute;left:40.0px;top:39.5px;width:96.0px;height:96.0px;background:#9c27b0;border-radius:24px"></div><svg style="position:absolute;left:64.0px;top:63.5px;" width="48" height="48" viewBox="0 0 24 24"><path fill="#fff" d="M21 8c-1.45 0-2.26 1.44-1.93 2.51l-3.55 3.56c-.3-.09-.74-.09-1.04 0l-2.55-2.55C12.27 10.45 11.46 9 10 9c-1.45 0-2.27 1.44-1.93 2.52l-4.56 4.55C2.44 15.74 1 16.55 1 18c0 1.1.9 2 2 2 1.45 0 2.26-1.44 1.93-2.51l4.55-4.56c.3.09.74.09 1.04 0l2.55 2.55C12.73 16.55 13.54 18 15 18c1.45 0 2.27-1.44 1.93-2.52l3.56-3.55c1.07.33 2.51-.48 2.51-1.93 0-1.1-.9-2-2-2zM15 9l.94-2.07L18 6l-2.06-.93L15 3l-.92 2.07L12 6l2.08.93zM3.5 11L4 9l2-.5L4 8l-.5-2L3 8l-2 .5L3 9z"/></svg><span style="position:absolute;top:50.7px;font:700 30.5px/1 'Liberation Sans',sans-serif;color:#1c1c1e;letter-spacing:0.32px;white-space:pre;left:161.0px;">Pattern Hunter</span><span style="position:absolute;top:95.5px;font:400 26px/1 'Liberation Sans',sans-serif;color:#757575;letter-spacing:-0.52px;white-space:pre;left:161.0px;transform:scaleX(0.9685);transform-origin:left center;">Pattern Recognition &amp; Correlation</span><div style="position:absolute;left:627.0px;top:24.0px;width:184.5px;height:47.5px;background:#f3f3f5;border-radius:12px"></div><svg style="position:absolute;left:643.0px;top:35.5px;" width="24" height="24" viewBox="0 0 24 24"><path fill="#666" d="M20 9V7c0-1.1-.9-2-2-2h-3c0-1.66-1.34-3-3-3S9 3.34 9 5H6c-1.1 0-2 .9-2 2v2c-1.66 0-3 1.34-3 3s1.34 3 3 3v4c0 1.1.9 2 2 2h12c1.1 0 2-.9 2-2v-4c1.66 0 3-1.34 3-3s-1.34-3-3-3zM7.5 11.5c0-.83.67-1.5 1.5-1.5s1.5.67 1.5 1.5S9.83 13 9 13s-1.5-.67-1.5-1.5zM16 17H8v-2h8v2zm-1-4c-.83 0-1.5-.67-1.5-1.5S14.17 10 15 10s1.5.67 1.5 1.5S15.83 13 15 13z"/></svg><span style="position:absolute;top:40.3px;font:400 18.3px/1 'Liberation Mono',monospace;color:#6a6a6a;letter-spacing:0.00px;white-space:pre;left:674.5px;">gpt-4-turbo</span><div style="position:absolute;left:669.0px;top:58.0px;width:126.5px;height:60.0px;background:#f3f3f5;border-radius:30px"></div><div style="position:absolute;left:693.0px;top:80.0px;width:16.0px;height:16.0px;background:#616161;border-radius:50%"></div><span style="position:absolute;top:76.0px;font:400 23px/1 'Liberation Sans',sans-serif;color:#444;letter-spacing:-0.71px;white-space:pre;left:722.0px;-webkit-text-stroke:0.4px #444;">IDLE</span><div style="position:absolute;left:40.0px;top:167.6px;width:755.5px;height:2.0px;background:#e9e9ec"></div><svg style="left:39.1px;top:197.2px" width="28" height="28" viewBox="0 0 24 24"><use href="#tok" fill="#757575"/></svg><span style="position:absolute;top:201.3px;font:400 22px/1 'Liberation Sans',sans-serif;color:#757575;letter-spacing:0.24px;white-space:pre;left:75.7px;">0 tokens</span><svg style="position:absolute;left:192.8px;top:196.7px;" width="28" height="28" viewBox="0 0 24 24"><path fill="#757575" d="M9 1h6v2H9zm10.03 6.39l1.42-1.42c-.43-.51-.9-.99-1.41-1.41l-1.42 1.42C16.07 4.74 14.12 4 12 4c-4.97 0-9 4.03-9 9s4.02 9 9 9 9-4.03 9-9c0-2.12-.74-4.07-1.97-5.61zM13 14h-2V8h2v6z"/></svg><span style="position:absolute;top:201.3px;font:400 22px/1 'Liberation Sans',sans-serif;color:#757575;letter-spacing:0.62px;white-space:pre;left:229.8px;">0ms</span><svg style="position:absolute;left:304.8px;top:196.9px;" width="28" height="28" viewBox="0 0 24 24"><path fill="#757575" d="M22.7 19l-9.1-9.1c.9-2.3.4-5-1.5-6.9-2-2-5-2.4-7.4-1.3L9 6 6 9 1.6 4.7C.4 7.1.9 10.1 2.9 12.1c1.9 1.9 4.6 2.4 6.9 1.5l9.1 9.1c.4.4 1 .4 1.4 0l2.3-2.3c.5-.4.5-1.1.1-1.4z"/></svg><span style="position:absolute;top:201.3px;font:400 22px/1 'Liberation Sans',sans-serif;color:#757575;letter-spacing:0.22px;white-space:pre;left:341.6px;">0 tools</span></div>
<div class="card" style="left:576.2px;top:1534px;width:837px;height:271.5px;border:1px solid #dfe1e7;box-shadow:0 6px 20px rgba(30,40,70,.07),0 1px 3px rgba(30,40,70,.05)"><div style="left:0;top:0;width:100%;height:6px;background:#3a8c7f"></div><div style="position:absolute;left:40.0px;top:39.5px;width:96.0px;height:96.0px;background:#00695c;border-radius:24px"></div><svg style="position:absolute;left:64.0px;top:63.5px;" width="48" height="48" viewBox="0 0 24 24"><path fill="#fff" d="M4 10h3v7H4zM10.5 10h3v7h-3zM2 19h20v3H2zM17 10h3v7h-3zM12 1L2 6v2h20V6z"/></svg><span style="position:absolute;top:50.7px;font:700 30.5px/1 'Liberation Sans',sans-serif;color:#1c1c1e;letter-spacing:-0.26px;white-space:pre;left:161.0px;">Financial Advisor</span><span style="position:absolute;top:95.5px;font:400 26px/1 'Liberation Sans',sans-serif;color:#757575;letter-spacing:-0.52px;white-space:pre;left:161.0px;transform:scaleX(0.9675);transform-origin:left center;">Cost-Benefit Analysis</span><div style="position:absolute;left:627.0px;top:24.0px;width:184.5px;height:47.5px;background:#f3f3f5;border-radius:12px"></div><svg style="position:absolute;left:643.0px;top:35.5px;" width="24" height="24" viewBox="0 0 24 24"><path fill="#666" d="M20 9V7c0-1.1-.9-2-2-2h-3c0-1.66-1.34-3-3-3S9 3.34 9 5H6c-1.1 0-2 .9-2 2v2c-1.66 0-3 1.34-3 3s1.34 3 3 3v4c0 1.1.9 2 2 2h12c1.1 0 2-.9 2-2v-4c1.66 0 3-1.34 3-3s-1.34-3-3-3zM7.5 11.5c0-.83.67-1.5 1.5-1.5s1.5.67 1.5 1.5S9.83 13 9 13s-1.5-.67-1.5-1.5zM16 17H8v-2h8v2zm-1-4c-.83 0-1.5-.67-1.5-1.5S14.17 10 15 10s1.5.67 1.5 1.5S15.83 13 15 13z"/></svg><span style="position:absolute;top:40.3px;font:400 18.3px/1 'Liberation Mono',monospace;color:#6a6a6a;letter-spacing:0.00px;white-space:pre;left:674.5px;">gpt-4-turbo</span><div style="position:absolute;left:669.0px;top:58.0px;width:126.5px;height:60.0px;background:#f3f3f5;border-radius:30px"></div><div style="position:absolute;left:693.0px;top:80.0px;width:16.0px;height:16.0px;background:#616161;border-radius:50%"></div><span style="position:absolute;top:76.0px;font:400 23px/1 'Liberation Sans',sans-serif;color:#444;letter-spacing:-0.71px;white-space:pre;left:722.0px;-webkit-text-stroke:0.4px #444;">IDLE</span><div style="position:absolute;left:40.0px;top:167.6px;width:755.5px;height:2.0px;background:#e9e9ec"></div><svg style="left:39.1px;top:197.2px" width="28" height="28" viewBox="0 0 24 24"><use href="#tok" fill="#757575"/></svg><span style="position:absolute;top:201.3px;font:400 22px/1 'Liberation Sans',sans-serif;color:#757575;letter-spacing:0.24px;white-space:pre;left:75.7px;">0 tokens</span><svg style="position:absolute;left:192.8px;top:196.7px;" width="28" height="28" viewBox="0 0 24 24"><path fill="#757575" d="M9 1h6v2H9zm10.03 6.39l1.42-1.42c-.43-.51-.9-.99-1.41-1.41l-1.42 1.42C16.07 4.74 14.12 4 12 4c-4.97 0-9 4.03-9 9s4.02 9 9 9 9-4.03 9-9c0-2.12-.74-4.07-1.97-5.61zM13 14h-2V8h2v6z"/></svg><span style="position:absolute;top:201.3px;font:400 22px/1 'Liberation Sans',sans-serif;color:#757575;letter-spacing:0.62px;white-space:pre;left:229.8px;">0ms</span><svg style="position:absolute;left:304.8px;top:196.9px;" width="28" height="28" viewBox="0 0 24 24"><path fill="#757575" d="M22.7 19l-9.1-9.1c.9-2.3.4-5-1.5-6.9-2-2-5-2.4-7.4-1.3L9 6 6 9 1.6 4.7C.4 7.1.9 10.1 2.9 12.1c1.9 1.9 4.6 2.4 6.9 1.5l9.1 9.1c.4.4 1 .4 1.4 0l2.3-2.3c.5-.4.5-1.1.1-1.4z"/></svg><span style="position:absolute;top:201.3px;font:400 22px/1 'Liberation Sans',sans-serif;color:#757575;letter-spacing:0.22px;white-space:pre;left:341.6px;">0 tools</span></div>
<div class="card" style="left:1439.2px;top:1534px;width:837px;height:271.5px;border:1px solid #dfe1e7;box-shadow:0 6px 20px rgba(30,40,70,.07),0 1px 3px rgba(30,40,70,.05)"><div style="left:0;top:0;width:100%;height:6px;background:#c44545"></div><div style="position:absolute;left:40.0px;top:39.5px;width:96.0px;height:96.0px;background:#b71c1c;border-radius:24px"></div><svg style="position:absolute;left:64.0px;top:63.5px;" width="48" height="48" viewBox="0 0 24 24"><path fill="#fff" d="M1 21h12v2H1zM5.245 8.07l2.83-2.827 14.14 14.142-2.828 2.828zM12.317 1l5.657 5.656-2.83 2.83-5.654-5.66zM3.825 9.485l5.657 5.657-2.828 2.828-5.657-5.657z"/></svg><span style="position:absolute;top:50.7px;font:700 30.5px/1 'Liberation Sans',sans-serif;color:#1c1c1e;letter-spacing:-0.10px;white-space:pre;left:161.0px;">Compliance Officer</span><span style="position:absolute;top:95.5px;font:400 26px/1 'Liberation Sans',sans-serif;color:#757575;letter-spacing:-0.52px;white-space:pre;left:161.0px;transform:scaleX(0.9563);transform-origin:left center;">Regulatory Compliance</span><div style="position:absolute;left:627.0px;top:24.0px;width:184.5px;height:47.5px;background:#f3f3f5;border-radius:12px"></div><svg style="position:absolute;left:643.0px;top:35.5px;" width="24" height="24" viewBox="0 0 24 24"><path fill="#666" d="M20 9V7c0-1.1-.9-2-2-2h-3c0-1.66-1.34-3-3-3S9 3.34 9 5H6c-1.1 0-2 .9-2 2v2c-1.66 0-3 1.34-3 3s1.34 3 3 3v4c0 1.1.9 2 2 2h12c1.1 0 2-.9 2-2v-4c1.66 0 3-1.34 3-3s-1.34-3-3-3zM7.5 11.5c0-.83.67-1.5 1.5-1.5s1.5.67 1.5 1.5S9.83 13 9 13s-1.5-.67-1.5-1.5zM16 17H8v-2h8v2zm-1-4c-.83 0-1.5-.67-1.5-1.5S14.17 10 15 10s1.5.67 1.5 1.5S15.83 13 15 13z"/></svg><span style="position:absolute;top:40.3px;font:400 18.3px/1 'Liberation Mono',monospace;color:#6a6a6a;letter-spacing:0.00px;white-space:pre;left:674.5px;">gpt-4-turbo</span><div style="position:absolute;left:669.0px;top:58.0px;width:126.5px;height:60.0px;background:#f3f3f5;border-radius:30px"></div><div style="position:absolute;left:693.0px;top:80.0px;width:16.0px;height:16.0px;background:#616161;border-radius:50%"></div><span style="position:absolute;top:76.0px;font:400 23px/1 'Liberation Sans',sans-serif;color:#444;letter-spacing:-0.71px;white-space:pre;left:722.0px;-webkit-text-stroke:0.4px #444;">IDLE</span><div style="position:absolute;left:40.0px;top:167.6px;width:755.5px;height:2.0px;background:#e9e9ec"></div><svg style="left:39.1px;top:197.2px" width="28" height="28" viewBox="0 0 24 24"><use href="#tok" fill="#757575"/></svg><span style="position:absolute;top:201.3px;font:400 22px/1 'Liberation Sans',sans-serif;color:#757575;letter-spacing:0.24px;white-space:pre;left:75.7px;">0 tokens</span><svg style="position:absolute;left:192.8px;top:196.7px;" width="28" height="28" viewBox="0 0 24 24"><path fill="#757575" d="M9 1h6v2H9zm10.03 6.39l1.42-1.42c-.43-.51-.9-.99-1.41-1.41l-1.42 1.42C16.07 4.74 14.12 4 12 4c-4.97 0-9 4.03-9 9s4.02 9 9 9 9-4.03 9-9c0-2.12-.74-4.07-1.97-5.61zM13 14h-2V8h2v6z"/></svg><span style="position:absolute;top:201.3px;font:400 22px/1 'Liberation Sans',sans-serif;color:#757575;letter-spacing:0.62px;white-space:pre;left:229.8px;">0ms</span><svg style="position:absolute;left:304.8px;top:196.9px;" width="28" height="28" viewBox="0 0 24 24"><path fill="#757575" d="M22.7 19l-9.1-9.1c.9-2.3.4-5-1.5-6.9-2-2-5-2.4-7.4-1.3L9 6 6 9 1.6 4.7C.4 7.1.9 10.1 2.9 12.1c1.9 1.9 4.6 2.4 6.9 1.5l9.1 9.1c.4.4 1 .4 1.4 0l2.3-2.3c.5-.4.5-1.1.1-1.4z"/></svg><span style="position:absolute;top:201.3px;font:400 22px/1 'Liberation Sans',sans-serif;color:#757575;letter-spacing:0.22px;white-space:pre;left:341.6px;">0 tools</span></div>
<div class="card" style="left:575.2px;top:1829px;width:839px;height:702px;border:2px solid #8fb6f5;box-shadow:0 0 0 5px rgba(59,130,246,.07),0 8px 40px rgba(59,130,246,.20)"><div style="left:0;top:0;width:100%;height:6px;background:#26c6da"></div><div style="position:absolute;left:40.0px;top:39.5px;width:96.0px;height:96.0px;background:#00bcd4;border-radius:24px"></div><svg style="position:absolute;left:64.0px;top:63.5px;" width="48" height="48" viewBox="0 0 24 24"><path fill="#fff" d="M7.76 16.24C6.67 15.16 6 13.66 6 12s.67-3.16 1.76-4.24l1.42 1.42C8.45 9.9 8 10.9 8 12c0 1.1.45 2.1 1.17 2.83l-1.41 1.41zm8.48 0C17.33 15.16 18 13.66 18 12s-.67-3.16-1.76-4.24l-1.42 1.42C15.55 9.9 16 10.9 16 12c0 1.1-.45 2.1-1.17 2.83l1.41 1.41zM12 10c-1.1 0-2 .9-2 2s.9 2 2 2 2-.9 2-2-.9-2-2-2zm8 2c0 2.21-.9 4.21-2.35 5.65l1.42 1.42C20.88 17.26 22 14.76 22 12s-1.12-5.26-2.93-7.07l-1.42 1.42C19.1 7.79 20 9.79 20 12zM6.35 6.35L4.93 4.93C3.12 6.74 2 9.24 2 12s1.12 5.26 2.93 7.07l1.42-1.42C4.9 16.21 4 14.21 4 12s.9-4.21 2.35-5.65z"/></svg><span style="position:absolute;top:50.7px;font:700 30.5px/1 'Liberation Sans',sans-serif;color:#1c1c1e;letter-spacing:-0.05px;white-space:pre;left:161.0px;">IoT Monitor</span><span style="position:absolute;top:95.5px;font:400 26px/1 'Liberation Sans',sans-serif;color:#757575;letter-spacing:-0.52px;white-space:pre;left:161.0px;transform:scaleX(0.9664);transform-origin:left center;">Real-Time Sensor Intelligence</span><div style="position:absolute;left:627.0px;top:24.0px;width:184.5px;height:47.5px;background:#f3f3f5;border-radius:12px"></div><svg style="position:absolute;left:643.0px;top:35.5px;" width="24" height="24" viewBox="0 0 24 24"><path fill="#666" d="M20 9V7c0-1.1-.9-2-2-2h-3c0-1.66-1.34-3-3-3S9 3.34 9 5H6c-1.1 0-2 .9-2 2v2c-1.66 0-3 1.34-3 3s1.34 3 3 3v4c0 1.1.9 2 2 2h12c1.1 0 2-.9 2-2v-4c1.66 0 3-1.34 3-3s-1.34-3-3-3zM7.5 11.5c0-.83.67-1.5 1.5-1.5s1.5.67 1.5 1.5S9.83 13 9 13s-1.5-.67-1.5-1.5zM16 17H8v-2h8v2zm-1-4c-.83 0-1.5-.67-1.5-1.5S14.17 10 15 10s1.5.67 1.5 1.5S15.83 13 15 13z"/></svg><span style="position:absolute;top:40.3px;font:400 18.3px/1 'Liberation Mono',monospace;color:#6a6a6a;letter-spacing:0.00px;white-space:pre;left:674.5px;">gpt-4-turbo</span><div style="position:absolute;left:584.5px;top:58.0px;width:211.0px;height:60.0px;background:#f3f3f5;border-radius:30px"></div><div style="position:absolute;left:608.5px;top:80.0px;width:16.0px;height:16.0px;background:#3b82f6;border-radius:50%"></div><span style="position:absolute;top:76.0px;font:400 23px/1 'Liberation Sans',sans-serif;color:#444;letter-spacing:0.34px;white-space:pre;left:637.5px;-webkit-text-stroke:0.4px #444;">THINKING...</span><div style="position:absolute;left:40.0px;top:168.0px;width:755.5px;height:80.0px;background:#f4f4f5;border-radius:18px"></div><svg style="position:absolute;left:64.0px;top:192.0px;" width="32" height="32" viewBox="0 0 24 24"><path fill="#00b8d4" d="M11.99 2C6.47 2 2 6.48 2 12s4.47 10 9.99 10C17.52 22 22 17.52 22 12S17.52 2 11.99 2zM12 20c-4.42 0-8-3.58-8-8s3.58-8 8-8 8 3.58 8 8-3.58 8-8 8zm.5-13H11v6l5.25 3.15.75-1.23-4.5-2.67z"/></svg><span style="position:absolute;top:196.3px;font:400 27px/1 'Liberation Sans',sans-serif;color:#1f1f1f;letter-spacing:-0.41px;white-space:pre;left:112.0px;">Connecting to IoT sensor network</span><div style="left:40px;top:281.5px;width:755.5px;height:200px;background:#e9effc;border-left:6px solid #3b82f6;border-radius:20px;overflow:hidden"><div style="position:absolute;left:8.0px;top:8.6px;width:92.0px;height:92.0px;border:3px solid rgba(215,228,255,.5);border-radius:50%"></div><div style="position:absolute;left:42.3px;top:41.0px;width:24.0px;height:24.0px;background:#3b82f6;border-radius:50%"></div><span style="position:absolute;top:34.1px;font:italic 400 27px/1 'Liberation Sans',sans-serif;color:#333;letter-spacing:-0.39px;white-space:pre;left:112.5px;">Alert generated: Pressure anomaly detected at</span></div><div style="position:absolute;left:40.0px;top:598.0px;width:755.5px;height:2.0px;background:#e9e9ec"></div><svg style="left:39.1px;top:627.6px" width="28" height="28" viewBox="0 0 24 24"><use href="#tok" fill="#757575"/></svg><span style="position:absolute;top:631.7px;font:400 22px/1 'Liberation Sans',sans-serif;color:#757575;letter-spacing:0.24px;white-space:pre;left:75.7px;">0 tokens</span><svg style="position:absolute;left:192.8px;top:627.1px;" width="28" height="28" viewBox="0 0 24 24"><path fill="#757575" d="M9 1h6v2H9zm10.03 6.39l1.42-1.42c-.43-.51-.9-.99-1.41-1.41l-1.42 1.42C16.07 4.74 14.12 4 12 4c-4.97 0-9 4.03-9 9s4.02 9 9 9 9-4.03 9-9c0-2.12-.74-4.07-1.97-5.61zM13 14h-2V8h2v6z"/></svg><span style="position:absolute;top:631.7px;font:400 22px/1 'Liberation Sans',sans-serif;color:#757575;letter-spacing:0.62px;white-space:pre;left:229.8px;">0ms</span><svg style="position:absolute;left:304.8px;top:627.3px;" width="28" height="28" viewBox="0 0 24 24"><path fill="#757575" d="M22.7 19l-9.1-9.1c.9-2.3.4-5-1.5-6.9-2-2-5-2.4-7.4-1.3L9 6 6 9 1.6 4.7C.4 7.1.9 10.1 2.9 12.1c1.9 1.9 4.6 2.4 6.9 1.5l9.1 9.1c.4.4 1 .4 1.4 0l2.3-2.3c.5-.4.5-1.1.1-1.4z"/></svg><span style="position:absolute;top:631.7px;font:400 22px/1 'Liberation Sans',sans-serif;color:#757575;letter-spacing:0.22px;white-space:pre;left:341.6px;">0 tools</span></div>
<div class="card" style="left:1439.2px;top:1830px;width:837px;height:271.5px;border:1px solid #dfe1e7;box-shadow:0 6px 20px rgba(30,40,70,.07),0 1px 3px rgba(30,40,70,.05)"><div style="left:0;top:0;width:100%;height:6px;background:#7e57c2"></div><div style="position:absolute;left:40.0px;top:39.5px;width:96.0px;height:96.0px;background:#673ab7;border-radius:24px"></div><svg style="position:absolute;left:64.0px;top:63.5px;" width="48" height="48" viewBox="0 0 24 24"><path fill="#fff" d="M18.25 7.6l-5.5-3.18c-.46-.27-1.04-.27-1.5 0L5.75 7.6c-.46.27-.75.76-.75 1.3v6.35c0 .54.29 1.03.75 1.3l5.5 3.18c.46.27 1.04.27 1.5 0l5.5-3.18c.46-.27.75-.76.75-1.3V8.9c0-.54-.29-1.03-.75-1.3zM7 14.96v-4.62l4 2.32v4.61l-4-2.31zm5-4.03L8 8.61l4-2.31 4 2.31-4 2.32zm1 6.34v-4.61l4-2.32v4.62l-4 2.31zM7 2H3.500C2.670 2 2 2.670 2 3.500V7h2V4h3V2zm10 0h3.500c.830 0 1.500.670 1.500 1.500V7h-2V4h-3V2zM7 22H3.500c-.830 0-1.500-.670-1.500-1.500V17h2v3h3v2zm10 0h3.500c.830 0 1.500-.670 1.500-1.500V17h-2v3h-3v2z"/></svg><span style="position:absolute;top:50.7px;font:700 30.5px/1 'Liberation Sans',sans-serif;color:#1c1c1e;letter-spacing:-0.15px;white-space:pre;left:161.0px;">Digital Twin Analyst</span><span style="position:absolute;top:95.5px;font:400 26px/1 'Liberation Sans',sans-serif;color:#757575;letter-spacing:-0.52px;white-space:pre;left:161.0px;transform:scaleX(0.9727);transform-origin:left center;">Virtual Asset Modeling</span><div style="position:absolute;left:627.0px;top:24.0px;width:184.5px;height:47.5px;background:#f3f3f5;border-radius:12px"></div><svg style="position:absolute;left:643.0px;top:35.5px;" width="24" height="24" viewBox="0 0 24 24"><path fill="#666" d="M20 9V7c0-1.1-.9-2-2-2h-3c0-1.66-1.34-3-3-3S9 3.34 9 5H6c-1.1 0-2 .9-2 2v2c-1.66 0-3 1.34-3 3s1.34 3 3 3v4c0 1.1.9 2 2 2h12c1.1 0 2-.9 2-2v-4c1.66 0 3-1.34 3-3s-1.34-3-3-3zM7.5 11.5c0-.83.67-1.5 1.5-1.5s1.5.67 1.5 1.5S9.83 13 9 13s-1.5-.67-1.5-1.5zM16 17H8v-2h8v2zm-1-4c-.83 0-1.5-.67-1.5-1.5S14.17 10 15 10s1.5.67 1.5 1.5S15.83 13 15 13z"/></svg><span style="position:absolute;top:40.3px;font:400 18.3px/1 'Liberation Mono',monospace;color:#6a6a6a;letter-spacing:0.00px;white-space:pre;left:674.5px;">gpt-4-turbo</span><div style="position:absolute;left:669.0px;top:58.0px;width:126.5px;height:60.0px;background:#f3f3f5;border-radius:30px"></div><div style="position:absolute;left:693.0px;top:80.0px;width:16.0px;height:16.0px;background:#616161;border-radius:50%"></div><span style="position:absolute;top:76.0px;font:400 23px/1 'Liberation Sans',sans-serif;color:#444;letter-spacing:-0.71px;white-space:pre;left:722.0px;-webkit-text-stroke:0.4px #444;">IDLE</span><div style="position:absolute;left:40.0px;top:167.6px;width:755.5px;height:2.0px;background:#e9e9ec"></div><svg style="left:39.1px;top:197.2px" width="28" height="28" viewBox="0 0 24 24"><use href="#tok" fill="#757575"/></svg><span style="position:absolute;top:201.3px;font:400 22px/1 'Liberation Sans',sans-serif;color:#757575;letter-spacing:0.24px;white-space:pre;left:75.7px;">0 tokens</span><svg style="position:absolute;left:192.8px;top:196.7px;" width="28" height="28" viewBox="0 0 24 24"><path fill="#757575" d="M9 1h6v2H9zm10.03 6.39l1.42-1.42c-.43-.51-.9-.99-1.41-1.41l-1.42 1.42C16.07 4.74 14.12 4 12 4c-4.97 0-9 4.03-9 9s4.02 9 9 9 9-4.03 9-9c0-2.12-.74-4.07-1.97-5.61zM13 14h-2V8h2v6z"/></svg><span style="position:absolute;top:201.3px;font:400 22px/1 'Liberation Sans',sans-serif;color:#757575;letter-spacing:0.62px;white-space:pre;left:229.8px;">0ms</span><svg style="position:absolute;left:304.8px;top:196.9px;" width="28" height="28" viewBox="0 0 24 24"><path fill="#757575" d="M22.7 19l-9.1-9.1c.9-2.3.4-5-1.5-6.9-2-2-5-2.4-7.4-1.3L9 6 6 9 1.6 4.7C.4 7.1.9 10.1 2.9 12.1c1.9 1.9 4.6 2.4 6.9 1.5l9.1 9.1c.4.4 1 .4 1.4 0l2.3-2.3c.5-.4.5-1.1.1-1.4z"/></svg><span style="position:absolute;top:201.3px;font:400 22px/1 'Liberation Sans',sans-serif;color:#757575;letter-spacing:0.22px;white-space:pre;left:341.6px;">0 tools</span></div>
<div style="left:2333px;top:495px;width:1431px;height:480px;background:#ecf0fa;border:2px solid #c3dbf8;border-radius:26px;overflow:hidden">
<svg style="position:absolute;left:24.5px;top:30.5px;" width="32" height="32" viewBox="0 0 24 24"><path fill="#3b76f6" d="M20 4H4c-1.11 0-2 .9-2 2v12c0 1.1.89 2 2 2h16c1.1 0 2-.9 2-2V6c0-1.1-.9-2-2-2zm0 14H4V8h16v10zm-2-1h-6v-2h6v2zM7.5 17l-1.41-1.41L8.67 13l-2.59-2.59L7.5 9l4 4-4 4z"/></svg>
<span style="position:absolute;top:34.6px;font:700 27px/1 'Liberation Sans',sans-serif;color:#1a2233;letter-spacing:-0.54px;white-space:pre;left:72.5px;transform:scaleX(0.9254);transform-origin:left center;">LLM Stream</span>
<div style="position:absolute;left:1249.5px;top:23.2px;width:154.5px;height:48.0px;background:rgba(0,230,118,.18);border-radius:24px"></div>
<div style="position:absolute;left:1267.3px;top:40.5px;width:14.0px;height:14.0px;background:#00e676;border-radius:50%"></div>
<span style="position:absolute;top:36.7px;font:400 22px/1 'Liberation Sans',sans-serif;color:#00e676;letter-spacing:-0.44px;white-space:pre;left:1293.0px;transform:scaleX(0.9458);transform-origin:left center;">Streaming</span>
<div style="left:23.40000000000009px;top:92.20000000000005px;width:1381px;height:360.5px;overflow:hidden">
<div style="left:0;top:0px;width:1356.5px;height:177px;background:#e3e7f1;border-radius:18px"><div style="position:absolute;left:15.6px;top:15.7px;width:116.7px;height:36.5px;background:rgba(0,230,118,.2);border-radius:8px"></div><span style="position:absolute;top:23.9px;font:700 20.5px/1 'Liberation Sans',sans-serif;color:#00e676;letter-spacing:-0.41px;white-space:pre;left:28.7px;transform:scaleX(0.8320);transform-origin:left center;">RESPONSE</span><span style="position:absolute;top:23.5px;font:400 22.4px/1 'Liberation Sans',sans-serif;color:#3b82f6;letter-spacing:-0.45px;white-space:pre;left:149.0px;transform:scaleX(0.9421);transform-origin:left center;">IoT Monitor</span><span style="position:absolute;top:26.5px;font:400 16.1px/1 'Liberation Mono',monospace;color:#9ea2ab;letter-spacing:0.00px;white-space:pre;right:16.5px;">23:43:57</span><div style="position:absolute;left:15.6px;top:63.4px;width:1324.7px;height:56.0px;background:#f8f9fc;border-left:5px solid #00e676;border-radius:9px"></div><span style="position:absolute;top:84.4px;font:400 18.3px/1 'Liberation Mono',monospace;color:#333;letter-spacing:0.00px;white-space:pre;left:31.8px;">Connected to 847 active sensor endpoints across 312 fire protection systems....</span><svg style="left:15.5px;top:131.5px" width="25" height="25" viewBox="0 0 24 24"><use href="#tok" fill="#a0a4ad"/></svg><span style="position:absolute;top:139.1px;font:400 18px/1 'Liberation Sans',sans-serif;color:#a0a4ad;letter-spacing:-0.15px;white-space:pre;left:48.4px;">19 tokens</span><svg style="position:absolute;left:160.0px;top:131.0px;" width="25" height="25" viewBox="0 0 24 24"><path fill="#a0a4ad" d="M9 1h6v2H9zm10.03 6.39l1.42-1.42c-.43-.51-.9-.99-1.41-1.41l-1.42 1.42C16.07 4.74 14.12 4 12 4c-4.97 0-9 4.03-9 9s4.02 9 9 9 9-4.03 9-9c0-2.12-.74-4.07-1.97-5.61zM13 14h-2V8h2v6z"/></svg><span style="position:absolute;top:139.1px;font:400 18px/1 'Liberation Sans',sans-serif;color:#a0a4ad;letter-spacing:0.00px;white-space:pre;left:192.7px;">450ms</span></div>
<div style="left:0;top:193.4px;width:1356.5px;height:177px;background:#e3e7f1;border-radius:18px"><div style="position:absolute;left:15.6px;top:15.7px;width:116.7px;height:36.5px;background:rgba(0,230,118,.2);border-radius:8px"></div><span style="position:absolute;top:23.9px;font:700 20.5px/1 'Liberation Sans',sans-serif;color:#00e676;letter-spacing:-0.41px;white-space:pre;left:28.7px;transform:scaleX(0.8320);transform-origin:left center;">RESPONSE</span><span style="position:absolute;top:23.5px;font:400 22.4px/1 'Liberation Sans',sans-serif;color:#3b82f6;letter-spacing:-0.45px;white-space:pre;left:149.0px;transform:scaleX(0.9421);transform-origin:left center;">IoT Monitor</span><span style="position:absolute;top:26.5px;font:400 16.1px/1 'Liberation Mono',monospace;color:#9ea2ab;letter-spacing:0.00px;white-space:pre;right:16.5px;">23:43:58</span><div style="position:absolute;left:15.6px;top:63.4px;width:1324.7px;height:56.0px;background:#f8f9fc;border-left:5px solid #00e676;border-radius:9px"></div><span style="position:absolute;top:84.4px;font:400 18.3px/1 'Liberation Mono',monospace;color:#333;letter-spacing:0.00px;white-space:pre;left:31.8px;">Streaming real-time telemetry: pressure, temperature, flow rate, vibration data....</span><svg style="left:15.5px;top:131.5px" width="25" height="25" viewBox="0 0 24 24"><use href="#tok" fill="#a0a4ad"/></svg><span style="position:absolute;top:139.1px;font:400 18px/1 'Liberation Sans',sans-serif;color:#a0a4ad;letter-spacing:-0.15px;white-space:pre;left:48.4px;">20 tokens</span><svg style="position:absolute;left:160.0px;top:131.0px;" width="25" height="25" viewBox="0 0 24 24"><path fill="#a0a4ad" d="M9 1h6v2H9zm10.03 6.39l1.42-1.42c-.43-.51-.9-.99-1.41-1.41l-1.42 1.42C16.07 4.74 14.12 4 12 4c-4.97 0-9 4.03-9 9s4.02 9 9 9 9-4.03 9-9c0-2.12-.74-4.07-1.97-5.61zM13 14h-2V8h2v6z"/></svg><span style="position:absolute;top:139.1px;font:400 18px/1 'Liberation Sans',sans-serif;color:#a0a4ad;letter-spacing:0.00px;white-space:pre;left:192.7px;">572ms</span></div>
<div style="position:absolute;left:1357.0px;top:0.0px;width:24.0px;height:360.5px;background:#f0f1f6;border-radius:12px"></div>
<div style="position:absolute;left:1360.5px;top:2.6px;width:17.5px;height:130.4px;background:#1e3a8a;border-radius:9px"></div>
</div>
</div>
<div style="left:2332px;top:999px;width:1432.5px;height:899px;background:#fff;border:2px solid #dfe0e4;border-radius:26px;overflow:hidden;box-shadow:0 2px 6px rgba(30,40,70,.04)">
<div style="position:absolute;left:0.0px;top:0.0px;width:1430.0px;height:117.0px;background:#f4f4f5"></div>
<div style="position:absolute;left:0.0px;top:117.0px;width:1430.0px;height:2.0px;background:#e2e2e5"></div>
<svg style="position:absolute;left:41.2px;top:39.0px;" width="40" height="40" viewBox="0 0 24 24"><path fill="#3b76f6" d="M21 6h-2v9H6v2c0 .55.45 1 1 1h11l4 4V7c0-.55-.45-1-1-1zm-4 6V3c0-.55-.45-1-1-1H3c-.55 0-1 .45-1 1v14l4-4h10c.55 0 1-.45 1-1z"/></svg>
<span style="position:absolute;top:45.9px;font:700 28px/1 'Liberation Sans',sans-serif;color:#1c1c1e;letter-spacing:-0.56px;white-space:pre;left:97.8px;transform:scaleX(0.9727);transform-origin:left center;">Agent Communication</span>
<div style="position:absolute;left:1221.3px;top:31.2px;width:167.7px;height:55.0px;background:#e8e8ea;border-radius:28px"></div>
<span style="position:absolute;top:46.7px;font:400 24px/1 'Liberation Sans',sans-serif;color:#666;letter-spacing:-0.30px;white-space:pre;left:1241.8px;">1 messages</span>
<div style="left:32.59999999999991px;top:151.20000000000005px;width:1364.4px;height:270.6px;background:#f7f8fb;border-left:6px solid #2196f3;border-radius:22px;overflow:hidden">
<div style="position:absolute;left:22.7px;top:24.2px;width:72.0px;height:72.0px;background:#c9a961;border-radius:18px"></div>
<svg style="left:40.7px;top:42.2px" width="36" height="36" viewBox="0 0 24 24"><use href="#hub" fill="#fff"/></svg>
<span style="position:absolute;top:31.8px;font:700 24.5px/1 'Liberation Sans',sans-serif;color:#1c1c1e;letter-spacing:-0.49px;white-space:pre;left:120.0px;transform:scaleX(0.9730);transform-origin:left center;">Mission Orchestrator</span>
<svg style="position:absolute;left:364.4px;top:31.8px;" width="24" height="24" viewBox="0 0 24 24"><path fill="#9a9a9a" d="M12 4l-1.41 1.41L16.17 11H4v2h12.17l-5.58 5.59L12 20l8-8z"/></svg>
<span style="position:absolute;top:31.8px;font:400 24.5px/1 'Liberation Sans',sans-serif;color:#555;letter-spacing:-0.35px;white-space:pre;left:402.9px;">Data Analyst</span>
<div style="position:absolute;left:1208.0px;top:24.1px;width:126.7px;height:39.5px;background:rgba(33,150,243,.2);border-radius:9px"></div>
<span style="position:absolute;top:33.3px;font:400 21px/1 'Liberation Sans',sans-serif;color:#2196f3;letter-spacing:-0.42px;white-space:pre;left:1225.5px;transform:scaleX(0.9334);transform-origin:left center;-webkit-text-stroke:0.3px #2196f3;">REQUEST</span>
<span style="position:absolute;top:85.3px;font:700 26px/1 'Liberation Sans',sans-serif;color:#1c1c1e;letter-spacing:-0.54px;white-space:pre;left:120.0px;">Data Ingestion Request</span>
<span style="position:absolute;top:130.4px;font:400 25.6px/1 'Liberation Sans',sans-serif;color:#333;letter-spacing:-0.51px;white-space:pre;left:120.0px;transform:scaleX(0.9911);transform-origin:left center;">Please ingest and validate portfolio data for the selected properties. Focus on sensor readings from the last 90</span>
<span style="position:absolute;top:165.8px;font:400 25.6px/1 'Liberation Sans',sans-serif;color:#333;letter-spacing:-0.51px;white-space:pre;left:120.0px;transform:scaleX(0.9385);transform-origin:left center;">days.</span>
<span style="position:absolute;top:221.1px;font:400 21px/1 'Liberation Sans',sans-serif;color:#8a8a8a;letter-spacing:-0.41px;white-space:pre;left:120.0px;">11:43:55 PM</span>
</div>
</div>
<div style="left:2332px;top:1924.5px;width:1432.5px;height:500px;background:#fff;border:2px solid #dfe0e4;border-radius:26px;overflow:hidden">
<div style="position:absolute;left:0.0px;top:118.5px;width:1430.0px;height:400.0px;background:#fff"></div>
<div style="position:absolute;left:32.6px;top:53.5px;width:1341.0px;height:500.0px;background:#f7f8fb;border:2px solid #8cefc0;border-radius:20px"></div>
<div style="position:absolute;left:62.4px;top:67.5px;width:80.0px;height:80.0px;background:#c9a961;border-radius:20px"></div>
<svg style="position:absolute;left:166.5px;top:125.5px;" width="24" height="24" viewBox="0 0 24 24"><path fill="#757575" d="M20 9V7c0-1.1-.9-2-2-2h-3c0-1.66-1.34-3-3-3S9 3.34 9 5H6c-1.1 0-2 .9-2 2v2c-1.66 0-3 1.34-3 3s1.34 3 3 3v4c0 1.1.9 2 2 2h12c1.1 0 2-.9 2-2v-4c1.66 0 3-1.34 3-3s-1.34-3-3-3zM7.5 11.5c0-.83.67-1.5 1.5-1.5s1.5.67 1.5 1.5S9.83 13 9 13s-1.5-.67-1.5-1.5zM16 17H8v-2h8v2zm-1-4c-.83 0-1.5-.67-1.5-1.5S14.17 10 15 10s1.5.67 1.5 1.5S15.83 13 15 13z"/></svg>
<span style="position:absolute;top:128.5px;font:400 22.4px/1 'Liberation Sans',sans-serif;color:#757575;letter-spacing:-0.14px;white-space:pre;left:199.2px;">Mission Orchestrator</span>
<div style="position:absolute;left:166.8px;top:176.1px;width:1176.6px;height:200.0px;background:#f3f3f4;border-radius:14px"></div>
<span style="position:absolute;top:197.0px;font:400 18.5px/1 'Liberation Sans',sans-serif;color:#757575;letter-spacing:1.25px;white-space:pre;left:182.8px;">INPUT</span>
<div style="position:absolute;left:1405.2px;top:119.5px;width:23.0px;height:200.0px;background:#f3f4f7;border-radius:11px"></div>
<div style="position:absolute;left:1408.0px;top:224.0px;width:18.0px;height:80.0px;background:#1e3a8a;border-radius:9px"></div>
<div style="position:absolute;left:0.0px;top:0.0px;width:1430.0px;height:117.5px;background:#f4f4f5"></div>
<div style="position:absolute;left:0.0px;top:117.5px;width:1430.0px;height:2.0px;background:#e2e2e5"></div>
<div style="position:absolute;left:85.0px;top:117.5px;width:34.0px;height:4.0px;background:#fff"></div>
<svg style="position:absolute;left:41.0px;top:37.5px;" width="40" height="40" viewBox="0 0 24 24"><path fill="#2196f3" d="M22.7 19l-9.1-9.1c.9-2.3.4-5-1.5-6.9-2-2-5-2.4-7.4-1.3L9 6 6 9 1.6 4.7C.4 7.1.9 10.1 2.9 12.1c1.9 1.9 4.6 2.4 6.9 1.5l9.1 9.1c.4.4 1 .4 1.4 0l2.3-2.3c.5-.4.5-1.1.1-1.4z"/></svg>
<span style="position:absolute;top:43.6px;font:700 28px/1 'Liberation Sans',sans-serif;color:#1c1c1e;letter-spacing:-0.56px;white-space:pre;left:97.8px;transform:scaleX(0.9698);transform-origin:left center;">Tool Invocations</span>
<div style="position:absolute;left:1280.2px;top:30.6px;width:108.6px;height:54.6px;background:#e8e8ea;border-radius:28px"></div>
<span style="position:absolute;top:46.0px;font:400 24px/1 'Liberation Sans',sans-serif;color:#666;letter-spacing:0.10px;white-space:pre;left:1299.8px;">1 calls</span>
</div>
<div id="sidebar"><div id="sbblue"></div>
<div style="position:absolute;left:40.0px;top:44.0px;width:80.0px;height:80.0px;background:linear-gradient(135deg,#1f3c8f 0%,#1a3478 100%);border-radius:22px;box-shadow:0 8px 20px rgba(0,0,0,.25)"></div>
<svg style="position:absolute;left:61.5px;top:65.0px;" width="37" height="37" viewBox="0 0 24 24"><path fill="#fff" d="M11 21h-1l1-7H7.5c-.58 0-.57-.32-.38-.66.19-.34.05-.08.07-.12C8.48 10.94 10.42 7.54 13 3h1l-1 7h3.500c.49 0 .56.33.47.51l-.07.15C12.960 17.550 11 21 11 21z"/></svg>
<span style="position:absolute;top:49.9px;font:700 32px/1 'Liberation Sans',sans-serif;color:#fff;letter-spacing:-0.60px;white-space:pre;left:145.0px;">Energy Utilities</span>
<span style="position:absolute;top:97.5px;font:400 24px/1 'Liberation Sans',sans-serif;color:#d0d6e4;letter-spacing:-0.48px;white-space:pre;left:145.0px;transform:scaleX(0.9491);transform-origin:left center;">Management Portal</span>
<div style="position:absolute;left:0.0px;top:166.0px;width:510.0px;height:2.0px;background:rgba(255,255,255,.09)"></div>
<span style="position:absolute;top:186.1px;font:700 20px/1 'Liberation Sans',sans-serif;color:#94a3b8;letter-spacing:0.63px;white-space:pre;left:48.5px;">MAIN</span>
<svg style="position:absolute;left:64.0px;top:247.5px;" width="36" height="36" viewBox="0 0 24 24"><path fill="#cbd3e1" d="M20.38 8.57l-1.23 1.85a8 8 0 0 1-.22 7.58H5.07A8 8 0 0 1 15.58 6.85l1.85-1.23A10 10 0 0 0 3.35 19a2 2 0 0 0 1.72 1h13.85a2 2 0 0 0 1.74-1 10 10 0 0 0-.27-10.44zm-9.79 6.84a2 2 0 0 0 2.83 0l5.66-8.49-8.49 5.66a2 2 0 0 0 0 2.83z"/></svg>
<span style="position:absolute;top:256.6px;font:400 30px/1 'Liberation Sans',sans-serif;color:#cbd3e1;letter-spacing:-0.60px;white-space:pre;left:124.5px;transform:scaleX(0.9841);transform-origin:left center;-webkit-text-stroke:0.7px #cbd3e1;">Dashboard</span>
<svg style="position:absolute;left:64.0px;top:335.2px;" width="36" height="36" viewBox="0 0 24 24"><path fill="#cbd3e1" d="M21 14c0-.55-.45-1-1-1h-2v2h2c.55 0 1-.45 1-1zm-1 3h-2v2h2c.55 0 1-.45 1-1s-.45-1-1-1zm-8-3h-2v4h2c0 1.100.9 2 2 2h3v-8h-3c-1.100 0-2 .9-2 2zM5 13c0-1.100.9-2 2-2h1.500c1.930 0 3.500-1.570 3.500-3.500S10.430 4 8.500 4H5c-.55 0-1 .45-1 1s.45 1 1 1h3.500c.830 0 1.500.670 1.500 1.500S9.330 9 8.500 9H7c-2.210 0-4 1.790-4 4s1.790 4 4 4h2v-2H7c-1.100 0-2-.9-2-2z"/></svg>
<span style="position:absolute;top:344.3px;font:400 30px/1 'Liberation Sans',sans-serif;color:#cbd3e1;letter-spacing:-0.60px;white-space:pre;left:124.5px;transform:scaleX(0.9845);transform-origin:left center;-webkit-text-stroke:0.7px #cbd3e1;">Sites</span>
<svg style="position:absolute;left:410.5px;top:341.7px;" width="36" height="36" viewBox="0 0 24 24"><path fill="#cbd3e1" d="M16.59 8.59L12 13.17 7.41 8.59 6 10l6 6 6-6z"/></svg>
<svg style="position:absolute;left:64.0px;top:423.1px;" width="36" height="36" viewBox="0 0 24 24"><path fill="#cbd3e1" d="M21 12.220C21 6.730 16.740 3 12 3c-4.690 0-9 3.650-9 9.280-.6.340-1 .980-1 1.720v2c0 1.100.9 2 2 2h1v-6.100c0-3.870 3.130-7 7-7s7 3.130 7 7V19h-8v2h8c1.100 0 2-.9 2-2v-1.220c.590-.310 1-.920 1-1.640v-2.300c0-.7-.410-1.310-1-1.620zM9 14c.55 0 1-.45 1-1s-.45-1-1-1-1 .45-1 1 .45 1 1 1zm6 0c.55 0 1-.45 1-1s-.45-1-1-1-1 .45-1 1 .45 1 1 1zM18 11.030C17.520 8.180 15.040 6 12.050 6c-3.030 0-6.290 2.510-6.030 6.450 2.470-1.010 4.330-3.210 4.860-5.890 1.310 2.630 4 4.470 7.120 4.470z"/></svg>
<span style="position:absolute;top:432.2px;font:400 30px/1 'Liberation Sans',sans-serif;color:#cbd3e1;letter-spacing:-0.60px;white-space:pre;left:124.5px;transform:scaleX(0.9889);transform-origin:left center;-webkit-text-stroke:0.7px #cbd3e1;">Service Requests</span>
<svg style="position:absolute;left:410.5px;top:429.6px;" width="36" height="36" viewBox="0 0 24 24"><path fill="#cbd3e1" d="M16.59 8.59L12 13.17 7.41 8.59 6 10l6 6 6-6z"/></svg>
<svg style="position:absolute;left:64.0px;top:511.1px;" width="36" height="36" viewBox="0 0 24 24"><path fill="#cbd3e1" d="M1 21h12v2H1zM5.245 8.07l2.83-2.827 14.14 14.142-2.828 2.828zM12.317 1l5.657 5.656-2.83 2.83-5.654-5.66zM3.825 9.485l5.657 5.657-2.828 2.828-5.657-5.657z"/></svg>
<span style="position:absolute;top:520.2px;font:400 30px/1 'Liberation Sans',sans-serif;color:#cbd3e1;letter-spacing:-0.75px;white-space:pre;left:124.5px;-webkit-text-stroke:0.7px #cbd3e1;">Compliance</span>
<svg style="position:absolute;left:410.5px;top:517.6px;" width="36" height="36" viewBox="0 0 24 24"><path fill="#cbd3e1" d="M16.59 8.59L12 13.17 7.41 8.59 6 10l6 6 6-6z"/></svg>
<svg style="position:absolute;left:64.0px;top:599.5px;" width="36" height="36" viewBox="0 0 24 24"><path fill="#cbd3e1" fill-rule="evenodd" d="M9 15c-2.670 0-8 1.340-8 4v2h16v-2c0-2.660-5.330-4-8-4zM4.740 9h8.530c.27 0 .49-.22.49-.49v-.02c0-.27-.22-.49-.49-.49H13c0-1.480-.81-2.750-2-3.450v.95c0 .28-.22.5-.5.5s-.5-.22-.5-.5V4.140C9.680 4.060 9.350 4 9 4s-.68.060-1 .14V5.500c0 .28-.22.5-.5.5S7 5.780 7 5.500v-.95C5.810 5.250 5 6.520 5 8h-.26c-.27 0-.49.22-.49.490v.03c0 .26.22.48.49.48zM9 13c1.860 0 3.410-1.280 3.860-3H5.140c.45 1.720 2 3 3.860 3zM22.02 5.94L22.87 6.07L22.87 6.93L22.02 7.06L21.68 7.88L22.19 8.58L21.58 9.19L20.88 8.68L20.06 9.02L19.93 9.87L19.07 9.87L18.94 9.02L18.12 8.68L17.42 9.19L16.81 8.58L17.32 7.88L16.98 7.06L16.13 6.93L16.13 6.07L16.98 5.94L17.32 5.12L16.81 4.42L17.42 3.81L18.12 4.32L18.94 3.98L19.07 3.13L19.93 3.13L20.06 3.98L20.88 4.32L21.58 3.81L22.19 4.42L21.68 5.12zM20.75 6.50a1.25 1.25 0 1 0 -2.50 0a1.25 1.25 0 1 0 2.50 0zM19.28 12.20L19.88 12.30L19.88 12.90L19.28 13.00L19.04 13.58L19.40 14.07L18.97 14.50L18.48 14.14L17.90 14.38L17.80 14.98L17.20 14.98L17.10 14.38L16.52 14.14L16.03 14.50L15.60 14.07L15.96 13.58L15.72 13.00L15.12 12.90L15.12 12.30L15.72 12.20L15.96 11.62L15.60 11.13L16.03 10.70L16.52 11.06L17.10 10.82L17.20 10.22L17.80 10.22L17.90 10.82L18.48 11.06L18.97 10.70L19.40 11.13L19.04 11.62zM18.35 12.60a0.85 0.85 0 1 0 -1.70 0a0.85 0.85 0 1 0 1.70 0z"/></svg>
<span style="position:absolute;top:608.6px;font:400 30px/1 'Liberation Sans',sans-serif;color:#cbd3e1;letter-spacing:-0.71px;white-space:pre;left:124.5px;-webkit-text-stroke:0.7px #cbd3e1;">Asset Management</span>
<svg style="position:absolute;left:410.5px;top:606.0px;" width="36" height="36" viewBox="0 0 24 24"><path fill="#cbd3e1" d="M16.59 8.59L12 13.17 7.41 8.59 6 10l6 6 6-6z"/></svg>
<svg style="position:absolute;left:64.0px;top:687.5px;" width="36" height="36" viewBox="0 0 24 24"><path fill="#cbd3e1" d="M20 2H4c-1 0-2 .9-2 2v3.010c0 .72.43 1.340 1 1.690V20c0 1.100 1.100 2 2 2h14c.9 0 2-.9 2-2V8.700c.57-.35 1-.970 1-1.690V4c0-1.100-1-2-2-2zm-5 12H9v-2h6v2zm5-7H4V4h16v3z"/></svg>
<span style="position:absolute;top:696.6px;font:400 30px/1 'Liberation Sans',sans-serif;color:#cbd3e1;letter-spacing:0.28px;white-space:pre;left:124.5px;-webkit-text-stroke:0.7px #cbd3e1;">Inventory</span>
<svg style="position:absolute;left:410.5px;top:694.0px;" width="36" height="36" viewBox="0 0 24 24"><path fill="#cbd3e1" d="M16.59 8.59L12 13.17 7.41 8.59 6 10l6 6 6-6z"/></svg>
<svg style="position:absolute;left:64.0px;top:767.5px;" width="36" height="36" viewBox="0 0 24 24"><path fill="#cbd3e1" d="M19 4h-1V2h-2v2H8V2H6v2H5c-1.110 0-1.990.9-1.990 2L3 20c0 1.100.89 2 2 2h14c1.100 0 2-.9 2-2V6c0-1.100-.9-2-2-2zm0 16H5V10h14v10zM9 14H7v-2h2v2zm4 0h-2v-2h2v2zm4 0h-2v-2h2v2zm-8 4H7v-2h2v2zm4 0h-2v-2h2v2zm4 0h-2v-2h2v2z"/></svg>
<span style="position:absolute;top:776.6px;font:400 30px/1 'Liberation Sans',sans-serif;color:#cbd3e1;letter-spacing:-0.60px;white-space:pre;left:124.5px;transform:scaleX(0.9886);transform-origin:left center;-webkit-text-stroke:0.7px #cbd3e1;">Calendar</span>
<svg style="position:absolute;left:64.0px;top:855.1px;" width="36" height="36" viewBox="0 0 24 24"><path fill="#cbd3e1" d="M5 13.180v4L12 21l7-3.820v-4L12 17l-7-3.820zM12 3L1 9l11 6 9-4.910V17h2V9L12 3z"/></svg>
<span style="position:absolute;top:864.2px;font:400 30px/1 'Liberation Sans',sans-serif;color:#cbd3e1;letter-spacing:-0.58px;white-space:pre;left:124.5px;-webkit-text-stroke:0.7px #cbd3e1;">Training</span>
<svg style="position:absolute;left:410.5px;top:861.6px;" width="36" height="36" viewBox="0 0 24 24"><path fill="#cbd3e1" d="M16.59 8.59L12 13.17 7.41 8.59 6 10l6 6 6-6z"/></svg>
<svg style="position:absolute;left:64.0px;top:943.5px;" width="36" height="36" viewBox="0 0 24 24"><path fill="#cbd3e1" d="M9.170 6l2 2H20v10H4V6h5.170M10 4H4c-1.100 0-1.990.9-1.990 2L2 18c0 1.100.9 2 2 2h16c1.100 0 2-.9 2-2V8c0-1.100-.9-2-2-2h-8l-2-2z"/></svg>
<span style="position:absolute;top:952.6px;font:400 30px/1 'Liberation Sans',sans-serif;color:#cbd3e1;letter-spacing:-0.67px;white-space:pre;left:124.5px;-webkit-text-stroke:0.7px #cbd3e1;">Documents</span>
<svg style="position:absolute;left:410.5px;top:950.0px;" width="36" height="36" viewBox="0 0 24 24"><path fill="#cbd3e1" d="M16.59 8.59L12 13.17 7.41 8.59 6 10l6 6 6-6z"/></svg>
<svg style="position:absolute;left:64.0px;top:1031.2px;" width="36" height="36" viewBox="0 0 24 24"><path fill="#cbd3e1" d="M19 3H5c-1.1 0-2 .9-2 2v14c0 1.1.9 2 2 2h14c1.1 0 2-.9 2-2V5c0-1.1-.9-2-2-2zM9 17H7v-5h2v5zm4 0h-2v-3h2v3zm0-5h-2v-2h2v2zm4 5h-2V7h2v10z"/></svg>
<span style="position:absolute;top:1040.3px;font:400 30px/1 'Liberation Sans',sans-serif;color:#cbd3e1;letter-spacing:-0.19px;white-space:pre;left:124.5px;-webkit-text-stroke:0.7px #cbd3e1;">Analytics</span>
<svg style="position:absolute;left:410.5px;top:1037.7px;" width="36" height="36" viewBox="0 0 24 24"><path fill="#cbd3e1" d="M16.59 8.59L12 13.17 7.41 8.59 6 10l6 6 6-6z"/></svg>
<svg style="position:absolute;left:64.0px;top:1119.3px;" width="36" height="36" viewBox="0 0 24 24"><path fill="#cbd3e1" d="M10 16v-1H3.010L3 19c0 1.110.89 2 2 2h14c1.110 0 2-.89 2-2v-4h-7v1h-4zm10-9h-4.010V5l-2-2h-4l-2 2v2H4c-1.100 0-2 .9-2 2v3c0 1.110.89 2 2 2h6v-2h4v2h6c1.100 0 2-.9 2-2V9c0-1.100-.9-2-2-2zm-6 0h-4V5h4v2z"/></svg>
<span style="position:absolute;top:1128.4px;font:400 30px/1 'Liberation Sans',sans-serif;color:#cbd3e1;letter-spacing:-0.04px;white-space:pre;left:124.5px;-webkit-text-stroke:0.7px #cbd3e1;">Portfolio Analytics</span>
<svg style="position:absolute;left:410.5px;top:1125.8px;" width="36" height="36" viewBox="0 0 24 24"><path fill="#cbd3e1" d="M16.59 8.59L12 13.17 7.41 8.59 6 10l6 6 6-6z"/></svg>
<svg style="position:absolute;left:64.0px;top:1335.1px;" width="36" height="36" viewBox="0 0 24 24"><path fill="#cbd3e1" d="M7.76 16.24C6.67 15.16 6 13.66 6 12s.67-3.16 1.76-4.24l1.42 1.42C8.45 9.9 8 10.9 8 12c0 1.1.45 2.1 1.17 2.83l-1.41 1.41zm8.48 0C17.33 15.16 18 13.66 18 12s-.67-3.16-1.76-4.24l-1.42 1.42C15.55 9.9 16 10.9 16 12c0 1.1-.45 2.1-1.17 2.83l1.41 1.41zM12 10c-1.1 0-2 .9-2 2s.9 2 2 2 2-.9 2-2-.9-2-2-2zm8 2c0 2.21-.9 4.21-2.35 5.65l1.42 1.42C20.88 17.26 22 14.76 22 12s-1.12-5.26-2.93-7.07l-1.42 1.42C19.1 7.79 20 9.79 20 12zM6.35 6.35L4.93 4.93C3.12 6.74 2 9.24 2 12s1.12 5.26 2.93 7.07l1.42-1.42C4.9 16.21 4 14.21 4 12s.9-4.21 2.35-5.65z"/></svg>
<span style="position:absolute;top:1344.2px;font:400 30px/1 'Liberation Sans',sans-serif;color:#cbd3e1;letter-spacing:-0.60px;white-space:pre;left:124.5px;transform:scaleX(0.9760);transform-origin:left center;-webkit-text-stroke:0.7px #cbd3e1;">IoT Sensors</span>
<svg style="position:absolute;left:64.0px;top:1423.0px;" width="36" height="36" viewBox="0 0 24 24"><path fill="#cbd3e1" d="M12 1L3 5v6c0 5.550 3.840 10.740 9 12 5.160-1.260 9-6.450 9-12V5l-9-4zm-2 16l-4-4 1.410-1.410L10 14.170l6.590-6.590L18 9l-8 8z"/></svg>
<span style="position:absolute;top:1432.1px;font:400 30px/1 'Liberation Sans',sans-serif;color:#cbd3e1;letter-spacing:-0.13px;white-space:pre;left:124.5px;-webkit-text-stroke:0.7px #cbd3e1;">Compliance Intelligence</span>
<svg style="position:absolute;left:64.0px;top:1511.5px;" width="36" height="36" viewBox="0 0 24 24"><path fill="#cbd3e1" d="M20.790 9.230l-2-3.460L14 8.540V3h-4v5.540L5.210 5.770l-2 3.460L8 12l-4.790 2.770 2 3.460L10 15.460V21h4v-5.540l4.790 2.770 2-3.460L16 12z"/></svg>
<span style="position:absolute;top:1520.6px;font:400 30px/1 'Liberation Sans',sans-serif;color:#cbd3e1;letter-spacing:-0.60px;white-space:pre;left:124.5px;transform:scaleX(0.9742);transform-origin:left center;-webkit-text-stroke:0.7px #cbd3e1;">Emergency Response</span>
<svg style="position:absolute;left:64.0px;top:1228.5px;" width="36" height="36" viewBox="0 0 24 24"><path fill="#cbd3e1" d="M1 21h22L12 2 1 21zm12-3h-2v-2h2v2zm0-4h-2v-4h2v4z"/></svg>
<span style="position:absolute;top:1214.6px;font:400 30px/1 'Liberation Sans',sans-serif;color:#cbd3e1;letter-spacing:-0.60px;white-space:pre;left:124.5px;transform:scaleX(0.9767);transform-origin:left center;-webkit-text-stroke:0.7px #cbd3e1;">Emergency</span>
<span style="position:absolute;top:1259.6px;font:400 30px/1 'Liberation Sans',sans-serif;color:#cbd3e1;letter-spacing:-0.60px;white-space:pre;left:124.5px;transform:scaleX(0.9619);transform-origin:left center;-webkit-text-stroke:0.7px #cbd3e1;">Response</span>
<svg style="position:absolute;left:410.5px;top:1232.0px;" width="36" height="36" viewBox="0 0 24 24"><path fill="#cbd3e1" d="M16.59 8.59L12 13.17 7.41 8.59 6 10l6 6 6-6z"/></svg>
<div style="position:absolute;left:41.0px;top:1584.0px;width:429.0px;height:83.0px;background:rgba(60,90,200,.10);border:2px solid rgba(255,255,255,.09);border-radius:24px;overflow:hidden"></div>
<div style="left:41px;top:1584px;width:429px;height:83px;border-radius:24px;overflow:hidden"><div style="left:0;top:18px;width:7px;height:47.5px;background:linear-gradient(180deg,#3555c8,#4169e1);border-radius:0 4px 4px 0"></div></div>
<svg style="position:absolute;left:66.0px;top:1600.5px;" width="36" height="36" viewBox="0 0 24 24"><path fill="#fff" fill-rule="evenodd" d="M9 15c-2.670 0-8 1.340-8 4v2h16v-2c0-2.660-5.330-4-8-4zM4.740 9h8.530c.27 0 .49-.22.49-.49v-.02c0-.27-.22-.49-.49-.49H13c0-1.480-.81-2.750-2-3.450v.95c0 .28-.22.5-.5.5s-.5-.22-.5-.5V4.140C9.680 4.060 9.350 4 9 4s-.68.060-1 .14V5.500c0 .28-.22.5-.5.5S7 5.780 7 5.500v-.95C5.810 5.250 5 6.520 5 8h-.26c-.27 0-.49.22-.49.490v.03c0 .26.22.48.49.48zM9 13c1.860 0 3.410-1.280 3.860-3H5.140c.45 1.720 2 3 3.860 3zM22.02 5.94L22.87 6.07L22.87 6.93L22.02 7.06L21.68 7.88L22.19 8.58L21.58 9.19L20.88 8.68L20.06 9.02L19.93 9.87L19.07 9.87L18.94 9.02L18.12 8.68L17.42 9.19L16.81 8.58L17.32 7.88L16.98 7.06L16.13 6.93L16.13 6.07L16.98 5.94L17.32 5.12L16.81 4.42L17.42 3.81L18.12 4.32L18.94 3.98L19.07 3.13L19.93 3.13L20.06 3.98L20.88 4.32L21.58 3.81L22.19 4.42L21.68 5.12zM20.75 6.50a1.25 1.25 0 1 0 -2.50 0a1.25 1.25 0 1 0 2.50 0zM19.28 12.20L19.88 12.30L19.88 12.90L19.28 13.00L19.04 13.58L19.40 14.07L18.97 14.50L18.48 14.14L17.90 14.38L17.80 14.98L17.20 14.98L17.10 14.38L16.52 14.14L16.03 14.50L15.60 14.07L15.96 13.58L15.72 13.00L15.12 12.90L15.12 12.30L15.72 12.20L15.96 11.62L15.60 11.13L16.03 10.70L16.52 11.06L17.10 10.82L17.20 10.22L17.80 10.22L17.90 10.82L18.48 11.06L18.97 10.70L19.40 11.13L19.04 11.62zM18.35 12.60a0.85 0.85 0 1 0 -1.70 0a0.85 0.85 0 1 0 1.70 0z"/></svg>
<span style="position:absolute;top:1609.6px;font:700 30px/1 'Liberation Sans',sans-serif;color:#fff;letter-spacing:-0.60px;white-space:pre;left:126.5px;transform:scaleX(0.9506);transform-origin:left center;">Predictive Maintenance</span>
</div>
<div id="header">
<svg style="position:absolute;left:64.0px;top:34.0px;" width="48" height="48" viewBox="0 0 24 24"><path fill="#e6eaf2" d="M3 18h18v-2H3v2zm0-5h18v-2H3v2zm0-7v2h18V6H3z"/></svg>
<svg style="position:absolute;left:2785.0px;top:34.0px;" width="48" height="48" viewBox="0 0 24 24"><path fill="#cdd5e3" d="M20 3h-1V1h-2v2H7V1H5v2H4c-1.1 0-2 .9-2 2v16c0 1.1.9 2 2 2h16c1.1 0 2-.9 2-2V5c0-1.1-.9-2-2-2zm0 18H4V10h16v11zm0-13H4V5h16v3z"/></svg>
<svg style="position:absolute;left:2897.0px;top:34.0px;" width="48" height="48" viewBox="0 0 24 24"><path fill="#525c72" d="M12 22c1.1 0 2-.9 2-2h-4c0 1.1.89 2 2 2zm6-6v-5c0-3.07-1.64-5.64-4.5-6.32V4c0-.83-.67-1.5-1.5-1.5s-1.5.67-1.5 1.5v.68C7.63 5.36 6 7.92 6 11v5l-2 2v1h16v-1l-2-2z"/></svg>
<div style="position:absolute;left:2914.0px;top:25.5px;width:40.0px;height:40.0px;background:#b71c1c;border-radius:50%"></div>
<span style="position:absolute;top:34.8px;font:700 23px/1 'Liberation Sans',sans-serif;color:#fff;letter-spacing:0.00px;white-space:pre;left:2927.5px;">6</span>
<svg style="left:3014px;top:28px" width="72" height="72" viewBox="0 0 72 72">
<defs><clipPath id="avc"><circle cx="36" cy="36" r="31.600"/></clipPath>
<filter id="avb" x="-10%" y="-10%" width="120%" height="120%"><feGaussianBlur stdDeviation="0.900"/></filter></defs>
<circle cx="36" cy="36" r="35.800" fill="#4f5a82"/>
<g clip-path="url(#avc)"><g filter="url(#avb)">
<rect width="72" height="72" fill="#e3cdb4"/>
<rect x="0" y="10" width="20" height="50" fill="#ead6c0"/>
<rect x="9" y="24" width="10" height="28" fill="#d9c3a8"/>
<rect x="8" y="44" width="12" height="5" fill="#cfe0d8"/>
<rect x="46" y="0" width="26" height="24" fill="#f0e2ce"/>
<rect x="48" y="22" width="24" height="6" fill="#b9a98a"/>
<rect x="48" y="28" width="24" height="9" fill="#ccd6df"/>
<rect x="48" y="37" width="24" height="7" fill="#c9b995"/>
<rect x="48" y="44" width="24" height="12" fill="#cdd6dc"/>
<rect x="52" y="47" width="12" height="6" fill="#9a9a86"/>
<path d="M2 60Q8 52 20 55L30 64 40 68 46 58Q56 52 64 60L68 72H2Z" fill="#3a2130"/>
<path d="M23 54 30 70H44L47 56 40 50Z" fill="#c78766"/>
<g transform="translate(0,-2.600)"><ellipse cx="21.300" cy="38" rx="2.600" ry="4.600" fill="#c68c70"/><ellipse cx="50" cy="38" rx="2.600" ry="4.600" fill="#c68c70"/>
<ellipse cx="35.600" cy="38" rx="14" ry="19.500" fill="#dba386"/><rect x="21.600" y="17" width="28" height="30" rx="11" fill="#dba386"/>
<path d="M22 30Q22 44 24 50L30 40Z" fill="#c98e72" opacity=".6"/>
<path d="M19.300 33Q16.500 12 30 7.300 40 3.800 48.500 9 56 14 52 33 50.500 22 45 19.500 36 16.500 27 19.500 21 23 19.300 33Z" fill="#5a3e2f"/>
<path d="M22.300 42Q22.500 60 35.500 61.500 48 60 48.600 42 46 48.500 41.500 47 35.500 44.500 29.500 47 25 48.500 22.300 42Z" fill="#6a4130"/>
<path d="M29 46Q35.500 42.500 42 46 35.500 45 29 46Z" fill="#7a4a36"/>
<ellipse cx="35.500" cy="49.500" rx="4.200" ry="1.400" fill="#b8705f"/>
<path d="M25.500 29.300Q29.500 27.300 33 29.300M38.500 29.300Q42 27.300 46 29.300" stroke="#4a3024" stroke-width="1.500" fill="none"/>
<ellipse cx="29.500" cy="32.300" rx="2.500" ry="1.100" fill="#3b2a22"/><ellipse cx="42" cy="32.300" rx="2.500" ry="1.100" fill="#3b2a22"/>
<path d="M35.500 33 33.800 41.500H37.500Z" fill="#c98e72" opacity=".7"/></g>
</g></g></svg>
<span style="position:absolute;top:32.1px;font:700 28px/1 'Liberation Sans',sans-serif;color:#fff;letter-spacing:-0.73px;white-space:pre;left:3106.0px;">Demo User</span>
<span style="position:absolute;top:72.3px;font:400 26px/1 'Liberation Sans',sans-serif;color:#c6cde0;letter-spacing:-0.30px;white-space:pre;left:3106.0px;">Administrator</span>
</div>
<div style="position:absolute;left:3828.0px;top:130.0px;width:12.0px;height:2030.0px;background:#eef0f6"></div>
<div style="position:absolute;left:3830.0px;top:131.0px;width:8.0px;height:1238.0px;background:#c0c8d6;border-radius:4px"></div>
</div>
<script>(function(){var w=window.innerWidth||3840;if(Math.abs(w-3840)>1){document.documentElement.style.zoom=w/3840;}})();</script>
</body></html>
